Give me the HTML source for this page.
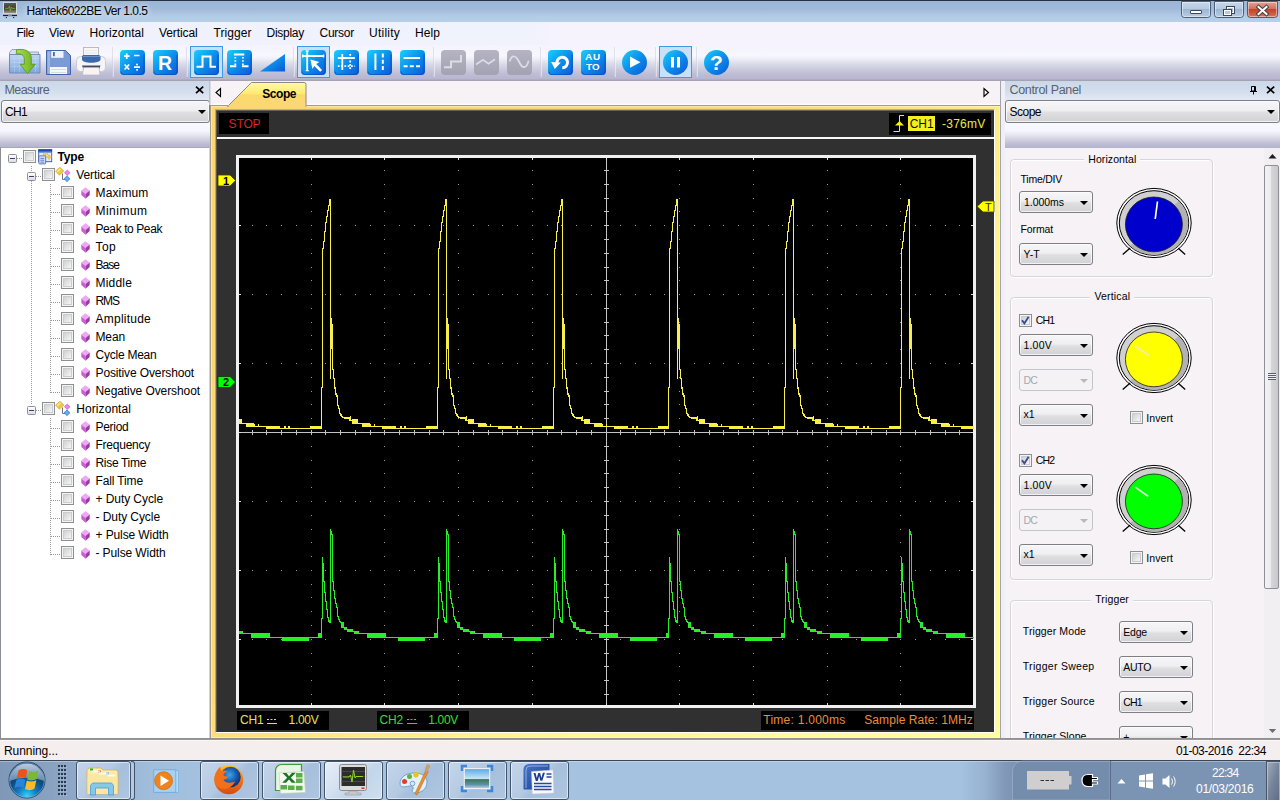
<!DOCTYPE html><html lang="en"><head><meta charset="utf-8"><title>Hantek6022BE</title><style>
html,body{margin:0;padding:0;background:#f6f2f6;overflow:hidden}
body{width:1280px;height:800px;position:relative;font-family:"Liberation Sans",sans-serif;font-size:12px}
.t{position:absolute;white-space:pre;line-height:1;}
.a{position:absolute}
.cb{position:absolute;border:1px solid #7e7e86;border-radius:3px;box-sizing:border-box;background:linear-gradient(#f6f5f7 0%,#efeef0 45%,#dfdee1 55%,#d2d1d5 100%);box-shadow:inset 0 0 0 1px rgba(255,255,255,.7)}
.cb.dis{border-color:#c4c4cc;background:#f4f2f5;box-shadow:none}
.arr{position:absolute;width:0;height:0;border-left:4px solid transparent;border-right:4px solid transparent;border-top:4px solid #000}
.arr.dis{border-top-color:#b8b8be}
.chk{position:absolute;width:13px;height:13px;box-sizing:border-box;border:1px solid #8e8f8f;background:#f4f4f4;box-shadow:inset 0 0 0 1px #f4f4f4, inset 0 0 0 2px #c9cdd0}
.chk i{position:absolute;left:2px;top:2px;width:7px;height:7px;background:linear-gradient(135deg,#cfd0d2,#f6f6f6)}
.grp{position:absolute;border:1px solid #d7d5dc;border-radius:4px;box-sizing:border-box;box-shadow:inset 1px 1px 0 #fff, 1px 1px 0 #fff}
</style></head><body>
<div class="a" style="left:0;top:0;width:1280px;height:22px;background:linear-gradient(#9cb6d5 0%,#9fb9d8 40%,#adc5e2 62%,#b3cde7 80%,#b6d0ea 100%)"></div>
<div class="a" style="left:0;top:0;width:1280px;height:1px;background:#27323f"></div>
<span class="t" style="left:26.50px;top:5.00px;font-size:12px;color:#000;letter-spacing:-0.504px;text-shadow:0 0 5px rgba(235,245,255,.9),0 0 9px rgba(225,238,252,.8),0 0 12px rgba(220,235,250,.6);">Hantek6022BE Ver 1.0.5</span>
<svg class="a" style="left:0;top:0" width="22" height="22" viewBox="0 0 22 22"><defs><linearGradient id="tis" x1="0" y1="0" x2="0" y2="1"><stop offset="0" stop-color="#5a5a58"/><stop offset=".55" stop-color="#3a3a30"/><stop offset="1" stop-color="#a09890"/></linearGradient></defs><rect x="3" y="2.200" width="14" height="12.200" fill="#e8eaf0" fill-opacity=".75"/><rect x="4" y="3" width="12" height="10.200" fill="url(#tis)"/><path d="M5.200 8.300h3.300l1-2.300l.9 5.200l1-4.200l.8 1.300h3" fill="none" stroke="#78a828" stroke-width="1"/><rect x="3" y="14.800" width="14" height="1.300" fill="#1a1c22"/><rect x="8" y="14.800" width="4" height="1.300" fill="#8a8a8a"/><rect x="5.800" y="17" width="1.200" height="1.100" fill="#2c3440"/><rect x="13" y="17" width="1.200" height="1.100" fill="#2c3440"/><rect x="7.500" y="17.200" width="5" height=".8" fill="#c8d0dc" fill-opacity=".7"/></svg>
<svg class="a" style="left:1178px;top:0" width="102" height="22" viewBox="1178 0 102 22"><defs><linearGradient id="cbg" x1="0" y1="0" x2="0" y2="1"><stop offset="0" stop-color="#c9d9eb"/><stop offset=".45" stop-color="#b5c9e0"/><stop offset=".5" stop-color="#9db6d3"/><stop offset="1" stop-color="#b8cee6"/></linearGradient><linearGradient id="cbr" x1="0" y1="0" x2="0" y2="1"><stop offset="0" stop-color="#e8a594"/><stop offset=".45" stop-color="#d4705a"/><stop offset=".5" stop-color="#c3432b"/><stop offset="1" stop-color="#d8745a"/></linearGradient></defs><path d="M1181.5 1.5h29v13a3 3 0 0 1 -3 3h-23a3 3 0 0 1 -3 -3z" fill="url(#cbg)" stroke="#4d5d75" stroke-width="1"/><path d="M1182.5 2.5h27v12a2 2 0 0 1 -2 2h-23a2 2 0 0 1 -2 -2z" fill="none" stroke="rgba(255,255,255,.45)" stroke-width="1"/><path d="M1214.5 1.5h29v13a3 3 0 0 1 -3 3h-23a3 3 0 0 1 -3 -3z" fill="url(#cbg)" stroke="#4d5d75" stroke-width="1"/><path d="M1215.5 2.5h27v12a2 2 0 0 1 -2 2h-23a2 2 0 0 1 -2 -2z" fill="none" stroke="rgba(255,255,255,.45)" stroke-width="1"/><path d="M1247.5 1.5h30v13a3 3 0 0 1 -3 3h-24a3 3 0 0 1 -3 -3z" fill="url(#cbr)" stroke="#4d5d75" stroke-width="1"/><path d="M1248.5 2.5h28v12a2 2 0 0 1 -2 2h-24a2 2 0 0 1 -2 -2z" fill="none" stroke="rgba(255,255,255,.45)" stroke-width="1"/><rect x="1190.5" y="10.5" width="11" height="3" rx=".5" fill="#fff" stroke="#445" stroke-width="1"/><rect x="1226.5" y="6.5" width="8" height="7" fill="none" stroke="#445" stroke-width="1"/><rect x="1227.5" y="7.5" width="6" height="5" fill="none" stroke="#fff" stroke-width="1"/><rect x="1223.5" y="9.5" width="8" height="6" fill="#b5c9e0" stroke="#445" stroke-width="1"/><rect x="1224.5" y="10.5" width="6" height="4" fill="none" stroke="#fff" stroke-width="1"/><path d="M1258.5 7l8 7M1266.5 7l-8 7" stroke="#3d3d45" stroke-width="3.8" stroke-linecap="square"/><path d="M1258.5 7l8 7M1266.5 7l-8 7" stroke="#fff" stroke-width="2" stroke-linecap="square"/></svg>
<div class="a" style="left:0;top:22px;width:1280px;height:23px;background:linear-gradient(90deg,#eff1fc 0,#f0f2fc 520px,#f6f3fd 560px,#f6f3fd 100%)"></div>
<span class="t" style="left:16.50px;top:27.00px;font-size:12px;color:#000;letter-spacing:-0.459px;">File</span>
<span class="t" style="left:49.00px;top:27.00px;font-size:12px;color:#000;letter-spacing:-0.198px;">View</span>
<span class="t" style="left:89.50px;top:27.00px;font-size:12px;color:#000;letter-spacing:0.048px;">Horizontal</span>
<span class="t" style="left:159.00px;top:27.00px;font-size:12px;color:#000;letter-spacing:-0.106px;">Vertical</span>
<span class="t" style="left:213.50px;top:27.00px;font-size:12px;color:#000;letter-spacing:0.062px;">Trigger</span>
<span class="t" style="left:266.50px;top:27.00px;font-size:12px;color:#000;letter-spacing:-0.264px;">Display</span>
<span class="t" style="left:319.50px;top:27.00px;font-size:12px;color:#000;letter-spacing:-0.251px;">Cursor</span>
<span class="t" style="left:369.00px;top:27.00px;font-size:12px;color:#000;letter-spacing:0.238px;">Utility</span>
<span class="t" style="left:415.00px;top:27.00px;font-size:12px;color:#000;letter-spacing:0.080px;">Help</span>
<div class="a" style="left:0;top:45px;width:1280px;height:35px;background:linear-gradient(#f5f3fe 0%,#f7f7ff 30%,#eeeef7 40%,#dedfea 51%,#cdcee0 66%,#bebdd5 83%,#b6b4cf 100%)"></div>
<div class="a" style="left:0;top:79px;width:1280px;height:2px;background:linear-gradient(#b4b2cc,#a09ea8)"></div>
<svg class="a" style="left:0;top:44px" width="760" height="36" viewBox="0 44 760 36"><defs><linearGradient id="bl" x1="0" y1="0" x2="1" y2="1"><stop offset="0" stop-color="#1ad0fc"/><stop offset=".5" stop-color="#0d8eec"/><stop offset="1" stop-color="#0b58d6"/></linearGradient><linearGradient id="gy" x1="0" y1="0" x2="0" y2="1"><stop offset="0" stop-color="#b4b4c2"/><stop offset="1" stop-color="#a2a2b2"/></linearGradient><linearGradient id="fo" x1="0" y1="0" x2="0" y2="1"><stop offset="0" stop-color="#c0d6f2"/><stop offset="1" stop-color="#7da7e0"/></linearGradient><linearGradient id="ga" x1="0" y1="0" x2="1" y2="0"><stop offset="0" stop-color="#a8dc50"/><stop offset="1" stop-color="#6cae24"/></linearGradient></defs><rect x="112" y="47" width="1" height="30" fill="#cfccdc" fill-opacity=".55"/><rect x="113" y="47" width="1" height="30" fill="#fbfaff" fill-opacity=".5"/><rect x="186" y="47" width="1" height="30" fill="#cfccdc" fill-opacity=".55"/><rect x="187" y="47" width="1" height="30" fill="#fbfaff" fill-opacity=".5"/><rect x="293" y="47" width="1" height="30" fill="#cfccdc" fill-opacity=".55"/><rect x="294" y="47" width="1" height="30" fill="#fbfaff" fill-opacity=".5"/><rect x="433" y="47" width="1" height="30" fill="#cfccdc" fill-opacity=".55"/><rect x="434" y="47" width="1" height="30" fill="#fbfaff" fill-opacity=".5"/><rect x="540" y="47" width="1" height="30" fill="#cfccdc" fill-opacity=".55"/><rect x="541" y="47" width="1" height="30" fill="#fbfaff" fill-opacity=".5"/><rect x="614" y="47" width="1" height="30" fill="#cfccdc" fill-opacity=".55"/><rect x="615" y="47" width="1" height="30" fill="#fbfaff" fill-opacity=".5"/><rect x="655" y="47" width="1" height="30" fill="#cfccdc" fill-opacity=".55"/><rect x="656" y="47" width="1" height="30" fill="#fbfaff" fill-opacity=".5"/><rect x="696" y="47" width="1" height="30" fill="#cfccdc" fill-opacity=".55"/><rect x="697" y="47" width="1" height="30" fill="#fbfaff" fill-opacity=".5"/><rect x="190.5" y="46.5" width="32" height="31" fill="#c9e0f7" stroke="#3c9be8"/><rect x="297.5" y="46.5" width="32" height="31" fill="#c9e0f7" stroke="#3c9be8"/><rect x="659.5" y="46.5" width="32" height="31" fill="#c9e0f7" stroke="#3c9be8"/><path d="M9.500 72.500v-20l2.500-3h10l2 2.500h14.500v20.500z" fill="#d6e2f4" stroke="#8c9cb8" stroke-width=".9"/><path d="M9.500 54.500h30.500v18.500h-30.500z" fill="url(#fo)" stroke="#6c86b4" stroke-width=".9"/><path d="M10.500 58.500h28.500M10.500 62.500h28.500M10.500 66.500h28.500M14.500 55.500v17M19.500 55.500v17M35.500 55.500v17" stroke="#d4e2f6" stroke-opacity=".5" stroke-width=".6"/><path d="M16.500 49.800c8-1.500 14.800 1.200 14.800 8.200v6.300h4l-7.800 9.400l-7.400-9.400h4.200v-5.500c0-3.500-3.500-5.500-8-5z" fill="url(#ga)" stroke="#5c9a1c" stroke-width=".9"/><g transform="translate(46,50)"><path d="M.5 .5h19l5 5v19h-24z" fill="#7b9bd6" stroke="#4262aa"/><path d="M1.500 1.500h2.500v22h-2.500z" fill="#9cb6e4"/><rect x="5.200" y="1" width="12.300" height="6.800" fill="#eef2fa"/><rect x="7" y="2" width="1.800" height="4.200" fill="#4a68a8"/><rect x="4" y="17" width="17" height="7" fill="#f6f7fa"/><path d="M5 19.500h15M5 22.500h15" stroke="#ccd4e4" stroke-width=".8"/></g><rect x="83.500" y="47.500" width="15" height="9" fill="#f7f7f9" stroke="#b0b4c2" stroke-width=".9"/><path d="M85 50.500h12M85 53h12" stroke="#e8e4e0" stroke-width=".8"/><rect x="76.500" y="56.500" width="29" height="15" rx="4" fill="#f5f5f8" stroke="#c4c6d2" stroke-width=".9"/><path d="M82 57c0-1.500 1-2 2.500-2h13.500c1.500 0 2.500 .500 2.500 2v2.500c0 2-4 3.200-9.300 3.200s-9.200-1.200-9.200-3.200z" fill="#3e68ac"/><path d="M83 56.500h17" stroke="#6c90cc" stroke-width="1"/><path d="M82 65.500h18.500l-1.500 4h-15.500z" fill="#3e4c66"/><path d="M83.500 67.500h15.500l1 7.500h-17.500z" fill="#faf3f1" stroke="#b4b4c0" stroke-width=".7"/><g transform="translate(120,50)"><rect x="0" y="0" width="25" height="25" rx="4" fill="url(#bl)"/><path d="M1 21.5v0a3 3 0 0 0 3 3h17a3 3 0 0 0 3-3v-17" fill="none" stroke="#0a46b4" stroke-opacity=".55" stroke-width="1.2"/><path d="M4 6.200h5.500M6.750 3.500v5.500M14 5.500h5.500M4.600 14.500l4.600 5M9.200 14.500l-4.600 5M14 17.200h6" stroke="#fff" stroke-width="1.700" fill="none"/><rect x="16.200" y="13.700" width="1.700" height="1.700" fill="#fff"/><rect x="16.200" y="19" width="1.700" height="1.700" fill="#fff"/></g><g transform="translate(153,50)"><rect x="0" y="0" width="25" height="25" rx="4" fill="url(#bl)"/><path d="M1 21.5v0a3 3 0 0 0 3 3h17a3 3 0 0 0 3-3v-17" fill="none" stroke="#0a46b4" stroke-opacity=".55" stroke-width="1.2"/></g><g transform="translate(194,50)"><rect x="0" y="0" width="25" height="25" rx="4" fill="url(#bl)"/><path d="M1 21.5v0a3 3 0 0 0 3 3h17a3 3 0 0 0 3-3v-17" fill="none" stroke="#0a46b4" stroke-opacity=".55" stroke-width="1.2"/><path d="M2.500 16.800h6v-10.400h8v10.400h5.500" stroke="#fff" stroke-width="2" fill="none"/></g><g transform="translate(227,50)"><rect x="0" y="0" width="25" height="25" rx="4" fill="url(#bl)"/><path d="M1 21.5v0a3 3 0 0 0 3 3h17a3 3 0 0 0 3-3v-17" fill="none" stroke="#0a46b4" stroke-opacity=".55" stroke-width="1.2"/><path d="M3 16.200h6.300M14.900 16.200h6.600M6.900 4.500h10.400" stroke="#fff" stroke-width="2"/><path d="M8.300 7v8M15.900 7v8" stroke="#fff" stroke-width="1.800" stroke-dasharray="1.600 1.600" fill="none"/></g><path d="M260 71.500h25v-17.500z" fill="url(#bl)"/><g transform="translate(301,50)"><rect x="0" y="0" width="25" height="25" rx="4" fill="url(#bl)"/><path d="M1 21.5v0a3 3 0 0 0 3 3h17a3 3 0 0 0 3-3v-17" fill="none" stroke="#0a46b4" stroke-opacity=".55" stroke-width="1.2"/><path d="M1.700 6h21M6.200 1v19.700" stroke="#fff" stroke-width="1.800"/><path d="M1.700 4.500v3M22.700 4.500v3M4.700 1h3M4.700 20.700h3" stroke="#fff" stroke-width="1.300"/><path d="M9.400 9.500l9 2.600l-3.200 1.900l5.900 5.900l-1.900 1.900l-5.900-5.900l-1.900 3.200z" fill="#fff"/></g><g transform="translate(334,50)"><rect x="0" y="0" width="25" height="25" rx="4" fill="url(#bl)"/><path d="M1 21.5v0a3 3 0 0 0 3 3h17a3 3 0 0 0 3-3v-17" fill="none" stroke="#0a46b4" stroke-opacity=".55" stroke-width="1.2"/><path d="M3.800 8h17M8.300 4v16" stroke="#fff" stroke-width="1.800"/><path d="M3.800 16.200h17M16.200 4v16" stroke="#fff" stroke-width="1.800" stroke-dasharray="1.800 1.500"/></g><g transform="translate(367,50)"><rect x="0" y="0" width="25" height="25" rx="4" fill="url(#bl)"/><path d="M1 21.5v0a3 3 0 0 0 3 3h17a3 3 0 0 0 3-3v-17" fill="none" stroke="#0a46b4" stroke-opacity=".55" stroke-width="1.2"/><path d="M8.400 3.500v16.500" stroke="#fff" stroke-width="2"/><path d="M15.800 3.500v16.500" stroke="#fff" stroke-width="2" stroke-dasharray="4 2.200"/></g><g transform="translate(400,50)"><rect x="0" y="0" width="25" height="25" rx="4" fill="url(#bl)"/><path d="M1 21.5v0a3 3 0 0 0 3 3h17a3 3 0 0 0 3-3v-17" fill="none" stroke="#0a46b4" stroke-opacity=".55" stroke-width="1.2"/><path d="M3.600 8h16.500" stroke="#fff" stroke-width="2"/><path d="M3.600 16.200h16.500" stroke="#fff" stroke-width="2" stroke-dasharray="4 2.200"/></g><g transform="translate(441,50)"><rect x="0" y="0" width="25" height="25" rx="4" fill="url(#gy)"/><path d="M3 17.200h7v-5.600h10v-6.600" stroke="#dcdce6" stroke-width="2" fill="none"/></g><g transform="translate(474,50)"><rect x="0" y="0" width="25" height="25" rx="4" fill="url(#gy)"/><path d="M2 14.400l7-4.600l5.500 3.900l6.500-4.500" stroke="#dcdce6" stroke-width="1.800" fill="none"/></g><g transform="translate(507,50)"><rect x="0" y="0" width="25" height="25" rx="4" fill="url(#gy)"/><path d="M2.600 11.600c2-7 6-7 9.600 0.400s7.400 6.500 9.400-1.400" stroke="#dcdce6" stroke-width="1.800" fill="none"/></g><g transform="translate(548,50)"><rect x="0" y="0" width="25" height="25" rx="4" fill="url(#bl)"/><path d="M1 21.5v0a3 3 0 0 0 3 3h17a3 3 0 0 0 3-3v-17" fill="none" stroke="#0a46b4" stroke-opacity=".55" stroke-width="1.2"/><path d="M9.300 14.500a5.300 5.300 0 1 1 5 3.300" stroke="#fff" stroke-width="3" fill="none"/><path d="M3.200 12l9.600 0.600l-6 6.400z" fill="#fff"/></g><g transform="translate(581,50)"><rect x="0" y="0" width="25" height="25" rx="4" fill="url(#bl)"/><path d="M1 21.5v0a3 3 0 0 0 3 3h17a3 3 0 0 0 3-3v-17" fill="none" stroke="#0a46b4" stroke-opacity=".55" stroke-width="1.2"/></g><circle cx="634.5" cy="62.5" r="12.5" fill="url(#bl)"/><circle cx="675.5" cy="62.5" r="12.5" fill="url(#bl)"/><circle cx="716.5" cy="62.5" r="12.5" fill="url(#bl)"/><path d="M630 56.500l10.500 5.700l-10.500 5.500z" fill="#fff"/><rect x="671" y="57" width="3" height="10.500" fill="#fff"/><rect x="677" y="57" width="3" height="10.500" fill="#fff"/></svg><span class="t" style="left:158.00px;top:54.00px;font-size:19.5px;color:#fff;font-weight:bold;">R</span><span class="t" style="left:585.30px;top:53.00px;font-size:9px;color:#fff;font-weight:bold;transform:scaleX(1.14);transform-origin:0 0;">A</span><span class="t" style="left:593.00px;top:53.00px;font-size:9px;color:#fff;font-weight:bold;transform:scaleX(1.1);transform-origin:0 0;">U</span><span class="t" style="left:586.00px;top:63.00px;font-size:9px;color:#fff;font-weight:bold;transform:scaleX(1.12);transform-origin:0 0;">T</span><span class="t" style="left:592.30px;top:63.00px;font-size:9px;color:#fff;font-weight:bold;transform:scaleX(1.08);transform-origin:0 0;">O</span><span class="t" style="left:710.00px;top:52.00px;font-size:21px;color:#fff;font-weight:bold;">?</span>
<div class="a" style="left:0;top:81px;width:210px;height:42px;background:linear-gradient(#cbd8e8 0px,#d3deec 10px,#e2e9f3 19px,#e6ecf8 42px)"></div><span class="t" style="left:4.50px;top:84.00px;font-size:12.5px;color:#56626f;letter-spacing:-0.590px;">Measure</span><svg class="a" style="left:195px;top:85px" width="10" height="10"><path d="M1 1.700l7.200 6.400M8.200 1.700l-7.200 6.400" stroke="#000" stroke-width="1.700"/></svg><div class="cb" style="left:1px;top:100px;width:208.5px;height:23px"></div><span class="t" style="left:5.00px;top:106.00px;font-size:12px;color:#000;letter-spacing:-0.669px;">CH1</span><div class="arr" style="left:198px;top:110px"></div><div class="a" style="left:0;top:123px;width:210px;height:25px;background:linear-gradient(#f9f8ff 0%,#f6f6fe 30%,#e6e6f0 48%,#d0d1e2 66%,#bebdd5 84%,#b4b2cc 100%)"></div><div class="a" style="left:0;top:147px;width:210px;height:591px;background:#fff;box-sizing:border-box;border:1px solid #8a8c96;border-top-color:#a9a7ba;border-bottom:none;border-right-color:#d4d2d8"></div><div class="a" style="left:17px;top:158px;height:1px;width:6px;background:repeating-linear-gradient(90deg,#9a9a9a 0 1px,transparent 1px 2px)"></div><div class="a" style="left:31px;top:166px;width:1px;height:6px;background:repeating-linear-gradient(#9a9a9a 0 1px,transparent 1px 2px)"></div><div class="a" style="left:31px;top:181px;width:1px;height:224px;background:repeating-linear-gradient(#9a9a9a 0 1px,transparent 1px 2px)"></div><div class="a" style="left:36px;top:176px;height:1px;width:6px;background:repeating-linear-gradient(90deg,#9a9a9a 0 1px,transparent 1px 2px)"></div><div class="a" style="left:36px;top:410px;height:1px;width:6px;background:repeating-linear-gradient(90deg,#9a9a9a 0 1px,transparent 1px 2px)"></div><div class="a" style="left:50px;top:184px;width:1px;height:209px;background:repeating-linear-gradient(#9a9a9a 0 1px,transparent 1px 2px)"></div><div class="a" style="left:50px;top:418px;width:1px;height:137px;background:repeating-linear-gradient(#9a9a9a 0 1px,transparent 1px 2px)"></div><div class="a" style="left:8px;top:154px;width:9px;height:9px;box-sizing:border-box;border:1px solid #8f8f96;border-radius:1.5px;background:linear-gradient(#fff,#dcdce6)"></div><div class="a" style="left:10px;top:158px;width:5px;height:1px;background:#3a3c78"></div><div class="chk" style="left:23px;top:150px"><i></i></div><svg class="a" style="left:36px;top:149px" width="17" height="16" viewBox="0 0 17 16"><rect x="2.700" y="0.700" width="13" height="12" fill="#e6ebf7" stroke="#3557a6" stroke-width=".9"/><rect x="2.300" y="0.300" width="13.800" height="2.500" fill="#2248b0"/><rect x="3" y="2.800" width="12.500" height="1" fill="#5c86dc"/><path d="M7 5.200h5M9.500 3.200v4M10.500 8h5M13 5.500v5" stroke="#e4b428" stroke-width="1.500"/><path d="M8 5.200h3M11.500 8h3" stroke="#fff2b0" stroke-width=".6"/><rect x="2.900" y="6.900" width="6.800" height="8" rx=".8" fill="#e4ecfb" stroke="#4c68a4" stroke-width=".9"/><path d="M4.300 9.300h4M4.300 11.200h4M4.300 13.100h4" stroke="#5474c8" stroke-width="1"/></svg><span class="t" style="left:57.50px;top:151.00px;font-size:12px;color:#000;font-weight:bold;letter-spacing:-0.154px;">Type</span><div class="a" style="left:27px;top:172px;width:9px;height:9px;box-sizing:border-box;border:1px solid #8f8f96;border-radius:1.5px;background:linear-gradient(#fff,#dcdce6)"></div><div class="a" style="left:29px;top:176px;width:5px;height:1px;background:#3a3c78"></div><div class="chk" style="left:42px;top:168px"><i></i></div><svg class="a" style="left:55px;top:167px" width="16" height="16" viewBox="0 0 16 16"><path d="M7.500 6.500v6h2.500" fill="none" stroke="#70747c" stroke-width="1"/><path d="M.600 4.200l4.200-3.900l4 3.600l-4.400 4.400z" fill="#f4c838" stroke="#c89c1c" stroke-width=".6"/><path d="M1.600 4.200l3.200-2.900l1.200 1.100l-3.300 3z" fill="#fbe48c"/><path d="M12.250 3l2.800 2.750l-2.800 2.750l-2.800-2.750z" fill="#ee82f0" stroke="#b450b8" stroke-width=".6"/><path d="M12 8.800l3 2.950l-3 2.950l-3-2.950z" fill="#62aaf4" stroke="#2c6ec4" stroke-width=".6"/></svg><span class="t" style="left:76.30px;top:169.00px;font-size:12px;color:#000;letter-spacing:-0.106px;">Vertical</span><div class="a" style="left:51px;top:194px;height:1px;width:10px;background:repeating-linear-gradient(90deg,#9a9a9a 0 1px,transparent 1px 2px)"></div><div class="chk" style="left:61px;top:186px"><i></i></div><svg class="a" style="left:80.5px;top:187px" width="9" height="12" viewBox="0 0 9 12"><path d="M4.5 0.3l4.2 3.2l-4.2 3.4l-4.2-3.4z" fill="#f0a8f4"/><path d="M.3 3.5l4.2 3.4v4.8l-4.2-3.6z" fill="#c860d0"/><path d="M8.7 3.5l-4.2 3.4v4.8l4.2-3.6z" fill="#9a3aa4"/></svg><span class="t" style="left:95.50px;top:187.00px;font-size:12px;color:#000;letter-spacing:0.143px;">Maximum</span><div class="a" style="left:51px;top:212px;height:1px;width:10px;background:repeating-linear-gradient(90deg,#9a9a9a 0 1px,transparent 1px 2px)"></div><div class="chk" style="left:61px;top:204px"><i></i></div><svg class="a" style="left:80.5px;top:205px" width="9" height="12" viewBox="0 0 9 12"><path d="M4.5 0.3l4.2 3.2l-4.2 3.4l-4.2-3.4z" fill="#f0a8f4"/><path d="M.3 3.5l4.2 3.4v4.8l-4.2-3.6z" fill="#c860d0"/><path d="M8.7 3.5l-4.2 3.4v4.8l4.2-3.6z" fill="#9a3aa4"/></svg><span class="t" style="left:95.50px;top:205.00px;font-size:12px;color:#000;letter-spacing:0.476px;">Minimum</span><div class="a" style="left:51px;top:230px;height:1px;width:10px;background:repeating-linear-gradient(90deg,#9a9a9a 0 1px,transparent 1px 2px)"></div><div class="chk" style="left:61px;top:222px"><i></i></div><svg class="a" style="left:80.5px;top:223px" width="9" height="12" viewBox="0 0 9 12"><path d="M4.5 0.3l4.2 3.2l-4.2 3.4l-4.2-3.4z" fill="#f0a8f4"/><path d="M.3 3.5l4.2 3.4v4.8l-4.2-3.6z" fill="#c860d0"/><path d="M8.7 3.5l-4.2 3.4v4.8l4.2-3.6z" fill="#9a3aa4"/></svg><span class="t" style="left:95.50px;top:223.00px;font-size:12px;color:#000;letter-spacing:-0.407px;">Peak to Peak</span><div class="a" style="left:51px;top:248px;height:1px;width:10px;background:repeating-linear-gradient(90deg,#9a9a9a 0 1px,transparent 1px 2px)"></div><div class="chk" style="left:61px;top:240px"><i></i></div><svg class="a" style="left:80.5px;top:241px" width="9" height="12" viewBox="0 0 9 12"><path d="M4.5 0.3l4.2 3.2l-4.2 3.4l-4.2-3.4z" fill="#f0a8f4"/><path d="M.3 3.5l4.2 3.4v4.8l-4.2-3.6z" fill="#c860d0"/><path d="M8.7 3.5l-4.2 3.4v4.8l4.2-3.6z" fill="#9a3aa4"/></svg><span class="t" style="left:95.50px;top:241.00px;font-size:12px;color:#000;letter-spacing:0.384px;">Top</span><div class="a" style="left:51px;top:266px;height:1px;width:10px;background:repeating-linear-gradient(90deg,#9a9a9a 0 1px,transparent 1px 2px)"></div><div class="chk" style="left:61px;top:258px"><i></i></div><svg class="a" style="left:80.5px;top:259px" width="9" height="12" viewBox="0 0 9 12"><path d="M4.5 0.3l4.2 3.2l-4.2 3.4l-4.2-3.4z" fill="#f0a8f4"/><path d="M.3 3.5l4.2 3.4v4.8l-4.2-3.6z" fill="#c860d0"/><path d="M8.7 3.5l-4.2 3.4v4.8l4.2-3.6z" fill="#9a3aa4"/></svg><span class="t" style="left:95.50px;top:259.00px;font-size:12px;color:#000;letter-spacing:-0.963px;">Base</span><div class="a" style="left:51px;top:284px;height:1px;width:10px;background:repeating-linear-gradient(90deg,#9a9a9a 0 1px,transparent 1px 2px)"></div><div class="chk" style="left:61px;top:276px"><i></i></div><svg class="a" style="left:80.5px;top:277px" width="9" height="12" viewBox="0 0 9 12"><path d="M4.5 0.3l4.2 3.2l-4.2 3.4l-4.2-3.4z" fill="#f0a8f4"/><path d="M.3 3.5l4.2 3.4v4.8l-4.2-3.6z" fill="#c860d0"/><path d="M8.7 3.5l-4.2 3.4v4.8l4.2-3.6z" fill="#9a3aa4"/></svg><span class="t" style="left:95.50px;top:277.00px;font-size:12px;color:#000;letter-spacing:0.192px;">Middle</span><div class="a" style="left:51px;top:302px;height:1px;width:10px;background:repeating-linear-gradient(90deg,#9a9a9a 0 1px,transparent 1px 2px)"></div><div class="chk" style="left:61px;top:294px"><i></i></div><svg class="a" style="left:80.5px;top:295px" width="9" height="12" viewBox="0 0 9 12"><path d="M4.5 0.3l4.2 3.2l-4.2 3.4l-4.2-3.4z" fill="#f0a8f4"/><path d="M.3 3.5l4.2 3.4v4.8l-4.2-3.6z" fill="#c860d0"/><path d="M8.7 3.5l-4.2 3.4v4.8l4.2-3.6z" fill="#9a3aa4"/></svg><span class="t" style="left:95.50px;top:295.00px;font-size:12px;color:#000;letter-spacing:-1.055px;">RMS</span><div class="a" style="left:51px;top:320px;height:1px;width:10px;background:repeating-linear-gradient(90deg,#9a9a9a 0 1px,transparent 1px 2px)"></div><div class="chk" style="left:61px;top:312px"><i></i></div><svg class="a" style="left:80.5px;top:313px" width="9" height="12" viewBox="0 0 9 12"><path d="M4.5 0.3l4.2 3.2l-4.2 3.4l-4.2-3.4z" fill="#f0a8f4"/><path d="M.3 3.5l4.2 3.4v4.8l-4.2-3.6z" fill="#c860d0"/><path d="M8.7 3.5l-4.2 3.4v4.8l4.2-3.6z" fill="#9a3aa4"/></svg><span class="t" style="left:95.50px;top:313.00px;font-size:12px;color:#000;letter-spacing:0.238px;">Amplitude</span><div class="a" style="left:51px;top:338px;height:1px;width:10px;background:repeating-linear-gradient(90deg,#9a9a9a 0 1px,transparent 1px 2px)"></div><div class="chk" style="left:61px;top:330px"><i></i></div><svg class="a" style="left:80.5px;top:331px" width="9" height="12" viewBox="0 0 9 12"><path d="M4.5 0.3l4.2 3.2l-4.2 3.4l-4.2-3.4z" fill="#f0a8f4"/><path d="M.3 3.5l4.2 3.4v4.8l-4.2-3.6z" fill="#c860d0"/><path d="M8.7 3.5l-4.2 3.4v4.8l4.2-3.6z" fill="#9a3aa4"/></svg><span class="t" style="left:95.50px;top:331.00px;font-size:12px;color:#000;letter-spacing:-0.129px;">Mean</span><div class="a" style="left:51px;top:356px;height:1px;width:10px;background:repeating-linear-gradient(90deg,#9a9a9a 0 1px,transparent 1px 2px)"></div><div class="chk" style="left:61px;top:348px"><i></i></div><svg class="a" style="left:80.5px;top:349px" width="9" height="12" viewBox="0 0 9 12"><path d="M4.5 0.3l4.2 3.2l-4.2 3.4l-4.2-3.4z" fill="#f0a8f4"/><path d="M.3 3.5l4.2 3.4v4.8l-4.2-3.6z" fill="#c860d0"/><path d="M8.7 3.5l-4.2 3.4v4.8l4.2-3.6z" fill="#9a3aa4"/></svg><span class="t" style="left:95.50px;top:349.00px;font-size:12px;color:#000;letter-spacing:-0.236px;">Cycle Mean</span><div class="a" style="left:51px;top:374px;height:1px;width:10px;background:repeating-linear-gradient(90deg,#9a9a9a 0 1px,transparent 1px 2px)"></div><div class="chk" style="left:61px;top:366px"><i></i></div><svg class="a" style="left:80.5px;top:367px" width="9" height="12" viewBox="0 0 9 12"><path d="M4.5 0.3l4.2 3.2l-4.2 3.4l-4.2-3.4z" fill="#f0a8f4"/><path d="M.3 3.5l4.2 3.4v4.8l-4.2-3.6z" fill="#c860d0"/><path d="M8.7 3.5l-4.2 3.4v4.8l4.2-3.6z" fill="#9a3aa4"/></svg><span class="t" style="left:95.50px;top:367.00px;font-size:12px;color:#000;letter-spacing:-0.123px;">Positive Overshoot</span><div class="a" style="left:51px;top:392px;height:1px;width:10px;background:repeating-linear-gradient(90deg,#9a9a9a 0 1px,transparent 1px 2px)"></div><div class="chk" style="left:61px;top:384px"><i></i></div><svg class="a" style="left:80.5px;top:385px" width="9" height="12" viewBox="0 0 9 12"><path d="M4.5 0.3l4.2 3.2l-4.2 3.4l-4.2-3.4z" fill="#f0a8f4"/><path d="M.3 3.5l4.2 3.4v4.8l-4.2-3.6z" fill="#c860d0"/><path d="M8.7 3.5l-4.2 3.4v4.8l4.2-3.6z" fill="#9a3aa4"/></svg><span class="t" style="left:95.50px;top:385.00px;font-size:12px;color:#000;letter-spacing:-0.086px;">Negative Overshoot</span><div class="a" style="left:27px;top:406px;width:9px;height:9px;box-sizing:border-box;border:1px solid #8f8f96;border-radius:1.5px;background:linear-gradient(#fff,#dcdce6)"></div><div class="a" style="left:29px;top:410px;width:5px;height:1px;background:#3a3c78"></div><div class="chk" style="left:42px;top:402px"><i></i></div><svg class="a" style="left:55px;top:401px" width="16" height="16" viewBox="0 0 16 16"><path d="M7.500 6.500v6h2.500" fill="none" stroke="#70747c" stroke-width="1"/><path d="M.600 4.200l4.200-3.900l4 3.600l-4.400 4.400z" fill="#f4c838" stroke="#c89c1c" stroke-width=".6"/><path d="M1.600 4.200l3.200-2.900l1.200 1.100l-3.300 3z" fill="#fbe48c"/><path d="M12.250 3l2.800 2.750l-2.800 2.750l-2.800-2.750z" fill="#ee82f0" stroke="#b450b8" stroke-width=".6"/><path d="M12 8.800l3 2.950l-3 2.950l-3-2.950z" fill="#62aaf4" stroke="#2c6ec4" stroke-width=".6"/></svg><span class="t" style="left:76.30px;top:403.00px;font-size:12px;color:#000;letter-spacing:0.068px;">Horizontal</span><div class="a" style="left:51px;top:428px;height:1px;width:10px;background:repeating-linear-gradient(90deg,#9a9a9a 0 1px,transparent 1px 2px)"></div><div class="chk" style="left:61px;top:420px"><i></i></div><svg class="a" style="left:80.5px;top:421px" width="9" height="12" viewBox="0 0 9 12"><path d="M4.5 0.3l4.2 3.2l-4.2 3.4l-4.2-3.4z" fill="#f0a8f4"/><path d="M.3 3.5l4.2 3.4v4.8l-4.2-3.6z" fill="#c860d0"/><path d="M8.7 3.5l-4.2 3.4v4.8l4.2-3.6z" fill="#9a3aa4"/></svg><span class="t" style="left:95.50px;top:421.00px;font-size:12px;color:#000;letter-spacing:-0.281px;">Period</span><div class="a" style="left:51px;top:446px;height:1px;width:10px;background:repeating-linear-gradient(90deg,#9a9a9a 0 1px,transparent 1px 2px)"></div><div class="chk" style="left:61px;top:438px"><i></i></div><svg class="a" style="left:80.5px;top:439px" width="9" height="12" viewBox="0 0 9 12"><path d="M4.5 0.3l4.2 3.2l-4.2 3.4l-4.2-3.4z" fill="#f0a8f4"/><path d="M.3 3.5l4.2 3.4v4.8l-4.2-3.6z" fill="#c860d0"/><path d="M8.7 3.5l-4.2 3.4v4.8l4.2-3.6z" fill="#9a3aa4"/></svg><span class="t" style="left:95.50px;top:439.00px;font-size:12px;color:#000;letter-spacing:-0.244px;">Frequency</span><div class="a" style="left:51px;top:464px;height:1px;width:10px;background:repeating-linear-gradient(90deg,#9a9a9a 0 1px,transparent 1px 2px)"></div><div class="chk" style="left:61px;top:456px"><i></i></div><svg class="a" style="left:80.5px;top:457px" width="9" height="12" viewBox="0 0 9 12"><path d="M4.5 0.3l4.2 3.2l-4.2 3.4l-4.2-3.4z" fill="#f0a8f4"/><path d="M.3 3.5l4.2 3.4v4.8l-4.2-3.6z" fill="#c860d0"/><path d="M8.7 3.5l-4.2 3.4v4.8l4.2-3.6z" fill="#9a3aa4"/></svg><span class="t" style="left:95.50px;top:457.00px;font-size:12px;color:#000;letter-spacing:-0.316px;">Rise Time</span><div class="a" style="left:51px;top:482px;height:1px;width:10px;background:repeating-linear-gradient(90deg,#9a9a9a 0 1px,transparent 1px 2px)"></div><div class="chk" style="left:61px;top:474px"><i></i></div><svg class="a" style="left:80.5px;top:475px" width="9" height="12" viewBox="0 0 9 12"><path d="M4.5 0.3l4.2 3.2l-4.2 3.4l-4.2-3.4z" fill="#f0a8f4"/><path d="M.3 3.5l4.2 3.4v4.8l-4.2-3.6z" fill="#c860d0"/><path d="M8.7 3.5l-4.2 3.4v4.8l4.2-3.6z" fill="#9a3aa4"/></svg><span class="t" style="left:95.50px;top:475.00px;font-size:12px;color:#000;letter-spacing:-0.130px;">Fall Time</span><div class="a" style="left:51px;top:500px;height:1px;width:10px;background:repeating-linear-gradient(90deg,#9a9a9a 0 1px,transparent 1px 2px)"></div><div class="chk" style="left:61px;top:492px"><i></i></div><svg class="a" style="left:80.5px;top:493px" width="9" height="12" viewBox="0 0 9 12"><path d="M4.5 0.3l4.2 3.2l-4.2 3.4l-4.2-3.4z" fill="#f0a8f4"/><path d="M.3 3.5l4.2 3.4v4.8l-4.2-3.6z" fill="#c860d0"/><path d="M8.7 3.5l-4.2 3.4v4.8l4.2-3.6z" fill="#9a3aa4"/></svg><span class="t" style="left:95.50px;top:493.00px;font-size:12px;color:#000;letter-spacing:-0.071px;">+ Duty Cycle</span><div class="a" style="left:51px;top:518px;height:1px;width:10px;background:repeating-linear-gradient(90deg,#9a9a9a 0 1px,transparent 1px 2px)"></div><div class="chk" style="left:61px;top:510px"><i></i></div><svg class="a" style="left:80.5px;top:511px" width="9" height="12" viewBox="0 0 9 12"><path d="M4.5 0.3l4.2 3.2l-4.2 3.4l-4.2-3.4z" fill="#f0a8f4"/><path d="M.3 3.5l4.2 3.4v4.8l-4.2-3.6z" fill="#c860d0"/><path d="M8.7 3.5l-4.2 3.4v4.8l4.2-3.6z" fill="#9a3aa4"/></svg><span class="t" style="left:95.50px;top:511.00px;font-size:12px;color:#000;letter-spacing:-0.070px;">- Duty Cycle</span><div class="a" style="left:51px;top:536px;height:1px;width:10px;background:repeating-linear-gradient(90deg,#9a9a9a 0 1px,transparent 1px 2px)"></div><div class="chk" style="left:61px;top:528px"><i></i></div><svg class="a" style="left:80.5px;top:529px" width="9" height="12" viewBox="0 0 9 12"><path d="M4.5 0.3l4.2 3.2l-4.2 3.4l-4.2-3.4z" fill="#f0a8f4"/><path d="M.3 3.5l4.2 3.4v4.8l-4.2-3.6z" fill="#c860d0"/><path d="M8.7 3.5l-4.2 3.4v4.8l4.2-3.6z" fill="#9a3aa4"/></svg><span class="t" style="left:95.50px;top:529.00px;font-size:12px;color:#000;letter-spacing:-0.105px;">+ Pulse Width</span><div class="a" style="left:51px;top:554px;height:1px;width:10px;background:repeating-linear-gradient(90deg,#9a9a9a 0 1px,transparent 1px 2px)"></div><div class="chk" style="left:61px;top:546px"><i></i></div><svg class="a" style="left:80.5px;top:547px" width="9" height="12" viewBox="0 0 9 12"><path d="M4.5 0.3l4.2 3.2l-4.2 3.4l-4.2-3.4z" fill="#f0a8f4"/><path d="M.3 3.5l4.2 3.4v4.8l-4.2-3.6z" fill="#c860d0"/><path d="M8.7 3.5l-4.2 3.4v4.8l4.2-3.6z" fill="#9a3aa4"/></svg><span class="t" style="left:95.50px;top:547.00px;font-size:12px;color:#000;letter-spacing:-0.104px;">- Pulse Width</span>
<div style="position:absolute;left:210px;top:105px;width:791px;height:634px;background:#a39c8a"></div>
<div style="position:absolute;left:211px;top:106px;width:789px;height:632px;background:linear-gradient(135deg,#fbd671 0%,#fbd975 40%,#fdeb85 55%,#fff694 70%,#fffc9e 100%)"></div>
<div style="position:absolute;left:211px;top:106px;width:789px;height:632px;box-sizing:border-box;border:1px solid rgba(255,250,225,.45)"></div>
<div style="position:absolute;left:215px;top:109px;width:780px;height:624px;box-sizing:border-box;border:1px solid;border-color:#c0b080 #fffef4 #fffef4 #b4a47a;background:#303030"></div>
<div style="position:absolute;left:216px;top:110px;width:778px;height:622px;box-sizing:border-box;border:1px solid;border-color:#686256 transparent transparent #5c564a;border-right:none;border-bottom:none;background:#303030"></div>
<div style="position:absolute;left:219px;top:113px;width:50px;height:21px;background:#000"></div>
<span class="t" style="left:228.50px;top:118.00px;font-size:12px;color:#d82424;letter-spacing:-0.114px;">STOP</span>
<div style="position:absolute;left:889px;top:113px;width:102px;height:22px;background:#000"></div>
<div style="position:absolute;left:908px;top:116px;width:27px;height:15px;background:#f4f020"></div>
<span class="t" style="left:909.80px;top:118.00px;font-size:12px;color:#101000;letter-spacing:-0.102px;">CH1</span>
<span class="t" style="left:942.00px;top:118.00px;font-size:12px;color:#e8e850;letter-spacing:0.247px;">-376mV</span>
<div style="position:absolute;left:217px;top:137px;width:777px;height:2px;background:#f8f8f8"></div>
<div style="position:absolute;left:236px;top:155px;width:740px;height:553px;background:#f0f0f0"></div>
<div style="position:absolute;left:239px;top:158px;width:734px;height:547px;background:#000"></div>
<div style="position:absolute;left:237px;top:711px;width:92px;height:19px;background:#000"></div>
<div style="position:absolute;left:377px;top:711px;width:92px;height:19px;background:#000"></div>
<div style="position:absolute;left:761px;top:711px;width:213px;height:19px;background:#000"></div>
<span class="t" style="left:240.00px;top:714.00px;font-size:12px;color:#e4e448;letter-spacing:-0.169px;">CH1</span>
<span class="t" style="left:288.50px;top:714.00px;font-size:12px;color:#e4e448;letter-spacing:-0.272px;">1.00V</span>
<span class="t" style="left:379.50px;top:714.00px;font-size:12px;color:#30e030;letter-spacing:-0.169px;">CH2</span>
<span class="t" style="left:428.20px;top:714.00px;font-size:12px;color:#30e030;letter-spacing:-0.312px;">1.00V</span>
<span class="t" style="left:763.30px;top:714.00px;font-size:12px;color:#f08c30;letter-spacing:0.253px;">Time: 1.000ms</span>
<span class="t" style="left:864.30px;top:714.00px;font-size:12px;color:#f08c30;letter-spacing:0.066px;">Sample Rate: 1MHz</span>
<svg style="position:absolute;left:0;top:0" width="1280" height="800" shape-rendering="crispEdges"><path d="M252 225h1v1h-1zM252 294h1v1h-1zM252 363h1v1h-1zM252 501h1v1h-1zM252 570h1v1h-1zM252 639h1v1h-1zM266 225h1v1h-1zM266 294h1v1h-1zM266 363h1v1h-1zM266 501h1v1h-1zM266 570h1v1h-1zM266 639h1v1h-1zM281 225h1v1h-1zM281 294h1v1h-1zM281 363h1v1h-1zM281 501h1v1h-1zM281 570h1v1h-1zM281 639h1v1h-1zM296 225h1v1h-1zM296 294h1v1h-1zM296 363h1v1h-1zM296 501h1v1h-1zM296 570h1v1h-1zM296 639h1v1h-1zM311 170h1v1h-1zM311 184h1v1h-1zM311 198h1v1h-1zM311 211h1v1h-1zM311 225h1v1h-1zM311 239h1v1h-1zM311 253h1v1h-1zM311 267h1v1h-1zM311 280h1v1h-1zM311 294h1v1h-1zM311 308h1v1h-1zM311 322h1v1h-1zM311 335h1v1h-1zM311 349h1v1h-1zM311 363h1v1h-1zM311 377h1v1h-1zM311 391h1v1h-1zM311 404h1v1h-1zM311 418h1v1h-1zM311 432h1v1h-1zM311 446h1v1h-1zM311 460h1v1h-1zM311 473h1v1h-1zM311 487h1v1h-1zM311 501h1v1h-1zM311 515h1v1h-1zM311 529h1v1h-1zM311 542h1v1h-1zM311 556h1v1h-1zM311 570h1v1h-1zM311 584h1v1h-1zM311 597h1v1h-1zM311 611h1v1h-1zM311 625h1v1h-1zM311 639h1v1h-1zM311 653h1v1h-1zM311 666h1v1h-1zM311 680h1v1h-1zM311 694h1v1h-1zM325 225h1v1h-1zM325 294h1v1h-1zM325 363h1v1h-1zM325 501h1v1h-1zM325 570h1v1h-1zM325 639h1v1h-1zM340 225h1v1h-1zM340 294h1v1h-1zM340 363h1v1h-1zM340 501h1v1h-1zM340 570h1v1h-1zM340 639h1v1h-1zM355 225h1v1h-1zM355 294h1v1h-1zM355 363h1v1h-1zM355 501h1v1h-1zM355 570h1v1h-1zM355 639h1v1h-1zM370 225h1v1h-1zM370 294h1v1h-1zM370 363h1v1h-1zM370 501h1v1h-1zM370 570h1v1h-1zM370 639h1v1h-1zM384 170h1v1h-1zM384 184h1v1h-1zM384 198h1v1h-1zM384 211h1v1h-1zM384 225h1v1h-1zM384 239h1v1h-1zM384 253h1v1h-1zM384 267h1v1h-1zM384 280h1v1h-1zM384 294h1v1h-1zM384 308h1v1h-1zM384 322h1v1h-1zM384 335h1v1h-1zM384 349h1v1h-1zM384 363h1v1h-1zM384 377h1v1h-1zM384 391h1v1h-1zM384 404h1v1h-1zM384 418h1v1h-1zM384 432h1v1h-1zM384 446h1v1h-1zM384 460h1v1h-1zM384 473h1v1h-1zM384 487h1v1h-1zM384 501h1v1h-1zM384 515h1v1h-1zM384 529h1v1h-1zM384 542h1v1h-1zM384 556h1v1h-1zM384 570h1v1h-1zM384 584h1v1h-1zM384 597h1v1h-1zM384 611h1v1h-1zM384 625h1v1h-1zM384 639h1v1h-1zM384 653h1v1h-1zM384 666h1v1h-1zM384 680h1v1h-1zM384 694h1v1h-1zM399 225h1v1h-1zM399 294h1v1h-1zM399 363h1v1h-1zM399 501h1v1h-1zM399 570h1v1h-1zM399 639h1v1h-1zM414 225h1v1h-1zM414 294h1v1h-1zM414 363h1v1h-1zM414 501h1v1h-1zM414 570h1v1h-1zM414 639h1v1h-1zM429 225h1v1h-1zM429 294h1v1h-1zM429 363h1v1h-1zM429 501h1v1h-1zM429 570h1v1h-1zM429 639h1v1h-1zM443 225h1v1h-1zM443 294h1v1h-1zM443 363h1v1h-1zM443 501h1v1h-1zM443 570h1v1h-1zM443 639h1v1h-1zM458 170h1v1h-1zM458 184h1v1h-1zM458 198h1v1h-1zM458 211h1v1h-1zM458 225h1v1h-1zM458 239h1v1h-1zM458 253h1v1h-1zM458 267h1v1h-1zM458 280h1v1h-1zM458 294h1v1h-1zM458 308h1v1h-1zM458 322h1v1h-1zM458 335h1v1h-1zM458 349h1v1h-1zM458 363h1v1h-1zM458 377h1v1h-1zM458 391h1v1h-1zM458 404h1v1h-1zM458 418h1v1h-1zM458 432h1v1h-1zM458 446h1v1h-1zM458 460h1v1h-1zM458 473h1v1h-1zM458 487h1v1h-1zM458 501h1v1h-1zM458 515h1v1h-1zM458 529h1v1h-1zM458 542h1v1h-1zM458 556h1v1h-1zM458 570h1v1h-1zM458 584h1v1h-1zM458 597h1v1h-1zM458 611h1v1h-1zM458 625h1v1h-1zM458 639h1v1h-1zM458 653h1v1h-1zM458 666h1v1h-1zM458 680h1v1h-1zM458 694h1v1h-1zM473 225h1v1h-1zM473 294h1v1h-1zM473 363h1v1h-1zM473 501h1v1h-1zM473 570h1v1h-1zM473 639h1v1h-1zM488 225h1v1h-1zM488 294h1v1h-1zM488 363h1v1h-1zM488 501h1v1h-1zM488 570h1v1h-1zM488 639h1v1h-1zM502 225h1v1h-1zM502 294h1v1h-1zM502 363h1v1h-1zM502 501h1v1h-1zM502 570h1v1h-1zM502 639h1v1h-1zM517 225h1v1h-1zM517 294h1v1h-1zM517 363h1v1h-1zM517 501h1v1h-1zM517 570h1v1h-1zM517 639h1v1h-1zM532 170h1v1h-1zM532 184h1v1h-1zM532 198h1v1h-1zM532 211h1v1h-1zM532 225h1v1h-1zM532 239h1v1h-1zM532 253h1v1h-1zM532 267h1v1h-1zM532 280h1v1h-1zM532 294h1v1h-1zM532 308h1v1h-1zM532 322h1v1h-1zM532 335h1v1h-1zM532 349h1v1h-1zM532 363h1v1h-1zM532 377h1v1h-1zM532 391h1v1h-1zM532 404h1v1h-1zM532 418h1v1h-1zM532 432h1v1h-1zM532 446h1v1h-1zM532 460h1v1h-1zM532 473h1v1h-1zM532 487h1v1h-1zM532 501h1v1h-1zM532 515h1v1h-1zM532 529h1v1h-1zM532 542h1v1h-1zM532 556h1v1h-1zM532 570h1v1h-1zM532 584h1v1h-1zM532 597h1v1h-1zM532 611h1v1h-1zM532 625h1v1h-1zM532 639h1v1h-1zM532 653h1v1h-1zM532 666h1v1h-1zM532 680h1v1h-1zM532 694h1v1h-1zM547 225h1v1h-1zM547 294h1v1h-1zM547 363h1v1h-1zM547 501h1v1h-1zM547 570h1v1h-1zM547 639h1v1h-1zM561 225h1v1h-1zM561 294h1v1h-1zM561 363h1v1h-1zM561 501h1v1h-1zM561 570h1v1h-1zM561 639h1v1h-1zM576 225h1v1h-1zM576 294h1v1h-1zM576 363h1v1h-1zM576 501h1v1h-1zM576 570h1v1h-1zM576 639h1v1h-1zM591 225h1v1h-1zM591 294h1v1h-1zM591 363h1v1h-1zM591 501h1v1h-1zM591 570h1v1h-1zM591 639h1v1h-1zM606 225h1v1h-1zM606 294h1v1h-1zM606 363h1v1h-1zM606 501h1v1h-1zM606 570h1v1h-1zM606 639h1v1h-1zM620 225h1v1h-1zM620 294h1v1h-1zM620 363h1v1h-1zM620 501h1v1h-1zM620 570h1v1h-1zM620 639h1v1h-1zM635 225h1v1h-1zM635 294h1v1h-1zM635 363h1v1h-1zM635 501h1v1h-1zM635 570h1v1h-1zM635 639h1v1h-1zM650 225h1v1h-1zM650 294h1v1h-1zM650 363h1v1h-1zM650 501h1v1h-1zM650 570h1v1h-1zM650 639h1v1h-1zM664 225h1v1h-1zM664 294h1v1h-1zM664 363h1v1h-1zM664 501h1v1h-1zM664 570h1v1h-1zM664 639h1v1h-1zM679 170h1v1h-1zM679 184h1v1h-1zM679 198h1v1h-1zM679 211h1v1h-1zM679 225h1v1h-1zM679 239h1v1h-1zM679 253h1v1h-1zM679 267h1v1h-1zM679 280h1v1h-1zM679 294h1v1h-1zM679 308h1v1h-1zM679 322h1v1h-1zM679 335h1v1h-1zM679 349h1v1h-1zM679 363h1v1h-1zM679 377h1v1h-1zM679 391h1v1h-1zM679 404h1v1h-1zM679 418h1v1h-1zM679 432h1v1h-1zM679 446h1v1h-1zM679 460h1v1h-1zM679 473h1v1h-1zM679 487h1v1h-1zM679 501h1v1h-1zM679 515h1v1h-1zM679 529h1v1h-1zM679 542h1v1h-1zM679 556h1v1h-1zM679 570h1v1h-1zM679 584h1v1h-1zM679 597h1v1h-1zM679 611h1v1h-1zM679 625h1v1h-1zM679 639h1v1h-1zM679 653h1v1h-1zM679 666h1v1h-1zM679 680h1v1h-1zM679 694h1v1h-1zM694 225h1v1h-1zM694 294h1v1h-1zM694 363h1v1h-1zM694 501h1v1h-1zM694 570h1v1h-1zM694 639h1v1h-1zM709 225h1v1h-1zM709 294h1v1h-1zM709 363h1v1h-1zM709 501h1v1h-1zM709 570h1v1h-1zM709 639h1v1h-1zM723 225h1v1h-1zM723 294h1v1h-1zM723 363h1v1h-1zM723 501h1v1h-1zM723 570h1v1h-1zM723 639h1v1h-1zM738 225h1v1h-1zM738 294h1v1h-1zM738 363h1v1h-1zM738 501h1v1h-1zM738 570h1v1h-1zM738 639h1v1h-1zM753 170h1v1h-1zM753 184h1v1h-1zM753 198h1v1h-1zM753 211h1v1h-1zM753 225h1v1h-1zM753 239h1v1h-1zM753 253h1v1h-1zM753 267h1v1h-1zM753 280h1v1h-1zM753 294h1v1h-1zM753 308h1v1h-1zM753 322h1v1h-1zM753 335h1v1h-1zM753 349h1v1h-1zM753 363h1v1h-1zM753 377h1v1h-1zM753 391h1v1h-1zM753 404h1v1h-1zM753 418h1v1h-1zM753 432h1v1h-1zM753 446h1v1h-1zM753 460h1v1h-1zM753 473h1v1h-1zM753 487h1v1h-1zM753 501h1v1h-1zM753 515h1v1h-1zM753 529h1v1h-1zM753 542h1v1h-1zM753 556h1v1h-1zM753 570h1v1h-1zM753 584h1v1h-1zM753 597h1v1h-1zM753 611h1v1h-1zM753 625h1v1h-1zM753 639h1v1h-1zM753 653h1v1h-1zM753 666h1v1h-1zM753 680h1v1h-1zM753 694h1v1h-1zM768 225h1v1h-1zM768 294h1v1h-1zM768 363h1v1h-1zM768 501h1v1h-1zM768 570h1v1h-1zM768 639h1v1h-1zM782 225h1v1h-1zM782 294h1v1h-1zM782 363h1v1h-1zM782 501h1v1h-1zM782 570h1v1h-1zM782 639h1v1h-1zM797 225h1v1h-1zM797 294h1v1h-1zM797 363h1v1h-1zM797 501h1v1h-1zM797 570h1v1h-1zM797 639h1v1h-1zM812 225h1v1h-1zM812 294h1v1h-1zM812 363h1v1h-1zM812 501h1v1h-1zM812 570h1v1h-1zM812 639h1v1h-1zM827 170h1v1h-1zM827 184h1v1h-1zM827 198h1v1h-1zM827 211h1v1h-1zM827 225h1v1h-1zM827 239h1v1h-1zM827 253h1v1h-1zM827 267h1v1h-1zM827 280h1v1h-1zM827 294h1v1h-1zM827 308h1v1h-1zM827 322h1v1h-1zM827 335h1v1h-1zM827 349h1v1h-1zM827 363h1v1h-1zM827 377h1v1h-1zM827 391h1v1h-1zM827 404h1v1h-1zM827 418h1v1h-1zM827 432h1v1h-1zM827 446h1v1h-1zM827 460h1v1h-1zM827 473h1v1h-1zM827 487h1v1h-1zM827 501h1v1h-1zM827 515h1v1h-1zM827 529h1v1h-1zM827 542h1v1h-1zM827 556h1v1h-1zM827 570h1v1h-1zM827 584h1v1h-1zM827 597h1v1h-1zM827 611h1v1h-1zM827 625h1v1h-1zM827 639h1v1h-1zM827 653h1v1h-1zM827 666h1v1h-1zM827 680h1v1h-1zM827 694h1v1h-1zM841 225h1v1h-1zM841 294h1v1h-1zM841 363h1v1h-1zM841 501h1v1h-1zM841 570h1v1h-1zM841 639h1v1h-1zM856 225h1v1h-1zM856 294h1v1h-1zM856 363h1v1h-1zM856 501h1v1h-1zM856 570h1v1h-1zM856 639h1v1h-1zM871 225h1v1h-1zM871 294h1v1h-1zM871 363h1v1h-1zM871 501h1v1h-1zM871 570h1v1h-1zM871 639h1v1h-1zM886 225h1v1h-1zM886 294h1v1h-1zM886 363h1v1h-1zM886 501h1v1h-1zM886 570h1v1h-1zM886 639h1v1h-1zM900 170h1v1h-1zM900 184h1v1h-1zM900 198h1v1h-1zM900 211h1v1h-1zM900 225h1v1h-1zM900 239h1v1h-1zM900 253h1v1h-1zM900 267h1v1h-1zM900 280h1v1h-1zM900 294h1v1h-1zM900 308h1v1h-1zM900 322h1v1h-1zM900 335h1v1h-1zM900 349h1v1h-1zM900 363h1v1h-1zM900 377h1v1h-1zM900 391h1v1h-1zM900 404h1v1h-1zM900 418h1v1h-1zM900 432h1v1h-1zM900 446h1v1h-1zM900 460h1v1h-1zM900 473h1v1h-1zM900 487h1v1h-1zM900 501h1v1h-1zM900 515h1v1h-1zM900 529h1v1h-1zM900 542h1v1h-1zM900 556h1v1h-1zM900 570h1v1h-1zM900 584h1v1h-1zM900 597h1v1h-1zM900 611h1v1h-1zM900 625h1v1h-1zM900 639h1v1h-1zM900 653h1v1h-1zM900 666h1v1h-1zM900 680h1v1h-1zM900 694h1v1h-1zM915 225h1v1h-1zM915 294h1v1h-1zM915 363h1v1h-1zM915 501h1v1h-1zM915 570h1v1h-1zM915 639h1v1h-1zM930 225h1v1h-1zM930 294h1v1h-1zM930 363h1v1h-1zM930 501h1v1h-1zM930 570h1v1h-1zM930 639h1v1h-1zM945 225h1v1h-1zM945 294h1v1h-1zM945 363h1v1h-1zM945 501h1v1h-1zM945 570h1v1h-1zM945 639h1v1h-1zM959 225h1v1h-1zM959 294h1v1h-1zM959 363h1v1h-1zM959 501h1v1h-1zM959 570h1v1h-1zM959 639h1v1h-1z" fill="#9c9c9c"/><rect x="606" y="158" width="1" height="547" fill="#c4c4c4"/><rect x="239" y="432" width="734" height="1" fill="#c4c4c4"/><rect x="604" y="170" width="5" height="1" fill="#c4c4c4"/><rect x="604" y="184" width="5" height="1" fill="#c4c4c4"/><rect x="604" y="198" width="5" height="1" fill="#c4c4c4"/><rect x="604" y="211" width="5" height="1" fill="#c4c4c4"/><rect x="604" y="225" width="5" height="1" fill="#c4c4c4"/><rect x="604" y="239" width="5" height="1" fill="#c4c4c4"/><rect x="604" y="253" width="5" height="1" fill="#c4c4c4"/><rect x="604" y="267" width="5" height="1" fill="#c4c4c4"/><rect x="604" y="280" width="5" height="1" fill="#c4c4c4"/><rect x="604" y="294" width="5" height="1" fill="#c4c4c4"/><rect x="604" y="308" width="5" height="1" fill="#c4c4c4"/><rect x="604" y="322" width="5" height="1" fill="#c4c4c4"/><rect x="604" y="335" width="5" height="1" fill="#c4c4c4"/><rect x="604" y="349" width="5" height="1" fill="#c4c4c4"/><rect x="604" y="363" width="5" height="1" fill="#c4c4c4"/><rect x="604" y="377" width="5" height="1" fill="#c4c4c4"/><rect x="604" y="391" width="5" height="1" fill="#c4c4c4"/><rect x="604" y="404" width="5" height="1" fill="#c4c4c4"/><rect x="604" y="418" width="5" height="1" fill="#c4c4c4"/><rect x="604" y="446" width="5" height="1" fill="#c4c4c4"/><rect x="604" y="460" width="5" height="1" fill="#c4c4c4"/><rect x="604" y="473" width="5" height="1" fill="#c4c4c4"/><rect x="604" y="487" width="5" height="1" fill="#c4c4c4"/><rect x="604" y="501" width="5" height="1" fill="#c4c4c4"/><rect x="604" y="515" width="5" height="1" fill="#c4c4c4"/><rect x="604" y="529" width="5" height="1" fill="#c4c4c4"/><rect x="604" y="542" width="5" height="1" fill="#c4c4c4"/><rect x="604" y="556" width="5" height="1" fill="#c4c4c4"/><rect x="604" y="570" width="5" height="1" fill="#c4c4c4"/><rect x="604" y="584" width="5" height="1" fill="#c4c4c4"/><rect x="604" y="597" width="5" height="1" fill="#c4c4c4"/><rect x="604" y="611" width="5" height="1" fill="#c4c4c4"/><rect x="604" y="625" width="5" height="1" fill="#c4c4c4"/><rect x="604" y="639" width="5" height="1" fill="#c4c4c4"/><rect x="604" y="653" width="5" height="1" fill="#c4c4c4"/><rect x="604" y="666" width="5" height="1" fill="#c4c4c4"/><rect x="604" y="680" width="5" height="1" fill="#c4c4c4"/><rect x="604" y="694" width="5" height="1" fill="#c4c4c4"/><rect x="252" y="430" width="1" height="5" fill="#c4c4c4"/><rect x="266" y="430" width="1" height="5" fill="#c4c4c4"/><rect x="281" y="430" width="1" height="5" fill="#c4c4c4"/><rect x="296" y="430" width="1" height="5" fill="#c4c4c4"/><rect x="311" y="430" width="1" height="5" fill="#c4c4c4"/><rect x="325" y="430" width="1" height="5" fill="#c4c4c4"/><rect x="340" y="430" width="1" height="5" fill="#c4c4c4"/><rect x="355" y="430" width="1" height="5" fill="#c4c4c4"/><rect x="370" y="430" width="1" height="5" fill="#c4c4c4"/><rect x="384" y="430" width="1" height="5" fill="#c4c4c4"/><rect x="399" y="430" width="1" height="5" fill="#c4c4c4"/><rect x="414" y="430" width="1" height="5" fill="#c4c4c4"/><rect x="429" y="430" width="1" height="5" fill="#c4c4c4"/><rect x="443" y="430" width="1" height="5" fill="#c4c4c4"/><rect x="458" y="430" width="1" height="5" fill="#c4c4c4"/><rect x="473" y="430" width="1" height="5" fill="#c4c4c4"/><rect x="488" y="430" width="1" height="5" fill="#c4c4c4"/><rect x="502" y="430" width="1" height="5" fill="#c4c4c4"/><rect x="517" y="430" width="1" height="5" fill="#c4c4c4"/><rect x="532" y="430" width="1" height="5" fill="#c4c4c4"/><rect x="547" y="430" width="1" height="5" fill="#c4c4c4"/><rect x="561" y="430" width="1" height="5" fill="#c4c4c4"/><rect x="576" y="430" width="1" height="5" fill="#c4c4c4"/><rect x="591" y="430" width="1" height="5" fill="#c4c4c4"/><rect x="620" y="430" width="1" height="5" fill="#c4c4c4"/><rect x="635" y="430" width="1" height="5" fill="#c4c4c4"/><rect x="650" y="430" width="1" height="5" fill="#c4c4c4"/><rect x="664" y="430" width="1" height="5" fill="#c4c4c4"/><rect x="679" y="430" width="1" height="5" fill="#c4c4c4"/><rect x="694" y="430" width="1" height="5" fill="#c4c4c4"/><rect x="709" y="430" width="1" height="5" fill="#c4c4c4"/><rect x="723" y="430" width="1" height="5" fill="#c4c4c4"/><rect x="738" y="430" width="1" height="5" fill="#c4c4c4"/><rect x="753" y="430" width="1" height="5" fill="#c4c4c4"/><rect x="768" y="430" width="1" height="5" fill="#c4c4c4"/><rect x="782" y="430" width="1" height="5" fill="#c4c4c4"/><rect x="797" y="430" width="1" height="5" fill="#c4c4c4"/><rect x="812" y="430" width="1" height="5" fill="#c4c4c4"/><rect x="827" y="430" width="1" height="5" fill="#c4c4c4"/><rect x="841" y="430" width="1" height="5" fill="#c4c4c4"/><rect x="856" y="430" width="1" height="5" fill="#c4c4c4"/><rect x="871" y="430" width="1" height="5" fill="#c4c4c4"/><rect x="886" y="430" width="1" height="5" fill="#c4c4c4"/><rect x="900" y="430" width="1" height="5" fill="#c4c4c4"/><rect x="915" y="430" width="1" height="5" fill="#c4c4c4"/><rect x="930" y="430" width="1" height="5" fill="#c4c4c4"/><rect x="945" y="430" width="1" height="5" fill="#c4c4c4"/><rect x="959" y="430" width="1" height="5" fill="#c4c4c4"/><rect x="311" y="158" width="1" height="2" fill="#ddd"/><rect x="311" y="703" width="1" height="2" fill="#ddd"/><rect x="384" y="158" width="1" height="2" fill="#ddd"/><rect x="384" y="703" width="1" height="2" fill="#ddd"/><rect x="458" y="158" width="1" height="2" fill="#ddd"/><rect x="458" y="703" width="1" height="2" fill="#ddd"/><rect x="532" y="158" width="1" height="2" fill="#ddd"/><rect x="532" y="703" width="1" height="2" fill="#ddd"/><rect x="606" y="158" width="1" height="2" fill="#ddd"/><rect x="606" y="703" width="1" height="2" fill="#ddd"/><rect x="679" y="158" width="1" height="2" fill="#ddd"/><rect x="679" y="703" width="1" height="2" fill="#ddd"/><rect x="753" y="158" width="1" height="2" fill="#ddd"/><rect x="753" y="703" width="1" height="2" fill="#ddd"/><rect x="827" y="158" width="1" height="2" fill="#ddd"/><rect x="827" y="703" width="1" height="2" fill="#ddd"/><rect x="900" y="158" width="1" height="2" fill="#ddd"/><rect x="900" y="703" width="1" height="2" fill="#ddd"/><rect x="239" y="225" width="2" height="1" fill="#ddd"/><rect x="971" y="225" width="2" height="1" fill="#ddd"/><rect x="239" y="294" width="2" height="1" fill="#ddd"/><rect x="971" y="294" width="2" height="1" fill="#ddd"/><rect x="239" y="363" width="2" height="1" fill="#ddd"/><rect x="971" y="363" width="2" height="1" fill="#ddd"/><rect x="239" y="432" width="2" height="1" fill="#ddd"/><rect x="971" y="432" width="2" height="1" fill="#ddd"/><rect x="239" y="501" width="2" height="1" fill="#ddd"/><rect x="971" y="501" width="2" height="1" fill="#ddd"/><rect x="239" y="570" width="2" height="1" fill="#ddd"/><rect x="971" y="570" width="2" height="1" fill="#ddd"/><rect x="239" y="639" width="2" height="1" fill="#ddd"/><rect x="971" y="639" width="2" height="1" fill="#ddd"/><path d="M239 419h3v5h-3zM242 423h4v1h-4zM246 423h8v4h-8zM254 424h1v3h-1zM255 426h3v1h-3zM258 424h1v3h-1zM259 426h7v1h-7zM266 426h14v3h-14zM280 428h4v1h-4zM284 426h2v3h-2zM286 428h2v1h-2zM288 426h2v3h-2zM290 428h20v1h-20zM310 426h11v3h-11zM321 387h1v42h-1zM322 248h1v140h-1zM323 241h1v8h-1zM324 231h1v11h-1zM325 222h1v10h-1zM326 216h1v7h-1zM327 210h1v7h-1zM328 205h1v6h-1zM329 199h1v7h-1zM330 199h1v180h-1zM331 318h1v31h-1zM332 324h1v46h-1zM333 369h1v10h-1zM334 378h1v11h-1zM335 387h1v8h-1zM336 393h1v4h-1zM337 395h1v11h-1zM338 405h1v4h-1zM339 408h1v6h-1zM340 413h1v3h-1zM341 414h1v3h-1zM342 416h1v2h-1zM343 417h1v1h-1zM344 417h5v2h-5zM349 417h1v4h-1zM350 416h1v5h-1zM351 420h1v1h-1zM352 419h6v5h-6zM358 423h4v1h-4zM362 423h8v4h-8zM370 424h1v3h-1zM371 426h3v1h-3zM374 424h1v3h-1zM375 426h7v1h-7zM382 426h14v3h-14zM396 428h4v1h-4zM400 426h2v3h-2zM402 428h2v1h-2zM404 426h2v3h-2zM406 428h20v1h-20zM426 426h11v3h-11zM437 387h1v42h-1zM438 248h1v140h-1zM439 241h1v8h-1zM440 231h1v11h-1zM441 222h1v10h-1zM442 216h1v7h-1zM443 210h1v7h-1zM444 205h1v6h-1zM445 199h1v7h-1zM446 199h1v180h-1zM447 318h1v31h-1zM448 324h1v46h-1zM449 369h1v10h-1zM450 378h1v11h-1zM451 387h1v8h-1zM452 393h1v4h-1zM453 395h1v11h-1zM454 405h1v4h-1zM455 408h1v6h-1zM456 413h1v3h-1zM457 414h1v3h-1zM458 416h1v2h-1zM459 417h1v1h-1zM460 417h5v2h-5zM465 417h1v4h-1zM466 416h1v5h-1zM467 420h1v1h-1zM468 419h6v5h-6zM474 423h4v1h-4zM478 423h8v4h-8zM486 424h1v3h-1zM487 426h3v1h-3zM490 424h1v3h-1zM491 426h7v1h-7zM498 426h14v3h-14zM512 428h4v1h-4zM516 426h2v3h-2zM518 428h2v1h-2zM520 426h2v3h-2zM522 428h20v1h-20zM542 426h11v3h-11zM553 387h1v42h-1zM554 248h1v140h-1zM555 241h1v8h-1zM556 231h1v11h-1zM557 222h1v10h-1zM558 216h1v7h-1zM559 210h1v7h-1zM560 205h1v6h-1zM561 199h1v7h-1zM562 199h1v180h-1zM563 318h1v31h-1zM564 324h1v46h-1zM565 369h1v10h-1zM566 378h1v11h-1zM567 387h1v8h-1zM568 393h1v4h-1zM569 395h1v11h-1zM570 405h1v4h-1zM571 408h1v6h-1zM572 413h1v3h-1zM573 414h1v3h-1zM574 416h1v2h-1zM575 417h1v1h-1zM576 417h5v2h-5zM581 417h1v4h-1zM582 416h1v5h-1zM583 420h1v1h-1zM584 419h6v5h-6zM590 423h4v1h-4zM594 423h8v4h-8zM602 424h1v3h-1zM603 426h3v1h-3zM606 424h1v3h-1zM607 426h7v1h-7zM614 426h14v3h-14zM628 428h4v1h-4zM632 426h2v3h-2zM634 428h2v1h-2zM636 426h2v3h-2zM638 428h20v1h-20zM658 426h10v3h-10zM668 387h1v42h-1zM669 248h1v140h-1zM670 241h1v8h-1zM671 231h1v11h-1zM672 222h1v10h-1zM673 216h1v7h-1zM674 210h1v7h-1zM675 205h1v6h-1zM676 199h1v7h-1zM677 199h1v180h-1zM678 318h1v31h-1zM679 324h1v46h-1zM680 369h1v10h-1zM681 378h1v11h-1zM682 387h1v8h-1zM683 393h1v4h-1zM684 395h1v11h-1zM685 405h1v4h-1zM686 408h1v6h-1zM687 413h1v3h-1zM688 414h1v3h-1zM689 416h1v2h-1zM690 417h1v1h-1zM691 417h5v2h-5zM696 417h1v4h-1zM697 416h1v5h-1zM698 420h1v1h-1zM699 419h6v5h-6zM705 423h4v1h-4zM709 423h8v4h-8zM717 424h1v3h-1zM718 426h3v1h-3zM721 424h1v3h-1zM722 426h7v1h-7zM729 426h14v3h-14zM743 428h4v1h-4zM747 426h2v3h-2zM749 428h2v1h-2zM751 426h2v3h-2zM753 428h20v1h-20zM773 426h11v3h-11zM784 387h1v42h-1zM785 248h1v140h-1zM786 241h1v8h-1zM787 231h1v11h-1zM788 222h1v10h-1zM789 216h1v7h-1zM790 210h1v7h-1zM791 205h1v6h-1zM792 199h1v7h-1zM793 199h1v180h-1zM794 318h1v31h-1zM795 324h1v46h-1zM796 369h1v10h-1zM797 378h1v11h-1zM798 387h1v8h-1zM799 393h1v4h-1zM800 395h1v11h-1zM801 405h1v4h-1zM802 408h1v6h-1zM803 413h1v3h-1zM804 414h1v3h-1zM805 416h1v2h-1zM806 417h1v1h-1zM807 417h5v2h-5zM812 417h1v4h-1zM813 416h1v5h-1zM814 420h1v1h-1zM815 419h6v5h-6zM821 423h4v1h-4zM825 423h8v4h-8zM833 424h1v3h-1zM834 426h3v1h-3zM837 424h1v3h-1zM838 426h7v1h-7zM845 426h14v3h-14zM859 428h4v1h-4zM863 426h2v3h-2zM865 428h2v1h-2zM867 426h2v3h-2zM869 428h20v1h-20zM889 426h11v3h-11zM900 387h1v42h-1zM901 248h1v140h-1zM902 241h1v8h-1zM903 231h1v11h-1zM904 222h1v10h-1zM905 216h1v7h-1zM906 210h1v7h-1zM907 205h1v6h-1zM908 199h1v7h-1zM909 199h1v180h-1zM910 318h1v31h-1zM911 324h1v46h-1zM912 369h1v10h-1zM913 378h1v11h-1zM914 387h1v8h-1zM915 393h1v4h-1zM916 395h1v11h-1zM917 405h1v4h-1zM918 408h1v6h-1zM919 413h1v3h-1zM920 414h1v3h-1zM921 416h1v2h-1zM922 417h1v1h-1zM923 417h5v2h-5zM928 417h1v4h-1zM929 416h1v5h-1zM930 420h1v1h-1zM931 419h6v5h-6zM937 423h4v1h-4zM941 423h8v4h-8zM949 424h1v3h-1zM950 426h3v1h-3zM953 424h1v3h-1zM954 426h7v1h-7zM961 426h13v3h-13z" fill="#f6f048"/><path d="M239 631h4v3h-4zM243 633h8v1h-8zM251 633h19v5h-19zM270 637h12v1h-12zM282 637h27v4h-27zM309 637h9v1h-9zM318 633h3v5h-3zM321 618h1v20h-1zM322 557h1v62h-1zM323 563h1v19h-1zM324 581h1v12h-1zM325 592h1v10h-1zM326 601h1v9h-1zM327 609h1v9h-1zM328 617h1v5h-1zM329 620h1v3h-1zM330 529h1v94h-1zM331 531h1v4h-1zM332 534h1v48h-1zM333 581h1v10h-1zM334 590h1v9h-1zM335 598h1v6h-1zM336 603h1v5h-1zM337 607h1v10h-1zM338 616h1v4h-1zM339 619h1v3h-1zM340 621h1v2h-1zM341 622h3v6h-3zM344 627h3v3h-3zM347 629h6v3h-6zM353 631h1v1h-1zM354 631h5v3h-5zM359 633h8v1h-8zM367 633h19v5h-19zM386 637h12v1h-12zM398 637h27v4h-27zM425 637h9v1h-9zM434 633h3v5h-3zM437 618h1v20h-1zM438 557h1v62h-1zM439 563h1v19h-1zM440 581h1v12h-1zM441 592h1v10h-1zM442 601h1v9h-1zM443 609h1v9h-1zM444 617h1v5h-1zM445 620h1v3h-1zM446 529h1v94h-1zM447 531h1v4h-1zM448 534h1v48h-1zM449 581h1v10h-1zM450 590h1v9h-1zM451 598h1v6h-1zM452 603h1v5h-1zM453 607h1v10h-1zM454 616h1v4h-1zM455 619h1v3h-1zM456 621h1v2h-1zM457 622h3v6h-3zM460 627h3v3h-3zM463 629h6v3h-6zM469 631h1v1h-1zM470 631h5v3h-5zM475 633h8v1h-8zM483 633h19v5h-19zM502 637h12v1h-12zM514 637h27v4h-27zM541 637h9v1h-9zM550 633h3v5h-3zM553 618h1v20h-1zM554 557h1v62h-1zM555 563h1v19h-1zM556 581h1v12h-1zM557 592h1v10h-1zM558 601h1v9h-1zM559 609h1v9h-1zM560 617h1v5h-1zM561 620h1v3h-1zM562 529h1v94h-1zM563 531h1v4h-1zM564 534h1v48h-1zM565 581h1v10h-1zM566 590h1v9h-1zM567 598h1v6h-1zM568 603h1v5h-1zM569 607h1v10h-1zM570 616h1v4h-1zM571 619h1v3h-1zM572 621h1v2h-1zM573 622h3v6h-3zM576 627h3v3h-3zM579 629h6v3h-6zM585 631h1v1h-1zM586 631h5v3h-5zM591 633h8v1h-8zM599 633h19v5h-19zM618 637h12v1h-12zM630 637h27v4h-27zM657 637h9v1h-9zM666 633h2v5h-2zM668 618h1v20h-1zM669 557h1v62h-1zM670 563h1v19h-1zM671 581h1v12h-1zM672 592h1v10h-1zM673 601h1v9h-1zM674 609h1v9h-1zM675 617h1v5h-1zM676 620h1v3h-1zM677 529h1v94h-1zM678 531h1v4h-1zM679 534h1v48h-1zM680 581h1v10h-1zM681 590h1v9h-1zM682 598h1v6h-1zM683 603h1v5h-1zM684 607h1v10h-1zM685 616h1v4h-1zM686 619h1v3h-1zM687 621h1v2h-1zM688 622h3v6h-3zM691 627h3v3h-3zM694 629h6v3h-6zM700 631h1v1h-1zM701 631h5v3h-5zM706 633h8v1h-8zM714 633h19v5h-19zM733 637h12v1h-12zM745 637h27v4h-27zM772 637h9v1h-9zM781 633h3v5h-3zM784 618h1v20h-1zM785 557h1v62h-1zM786 563h1v19h-1zM787 581h1v12h-1zM788 592h1v10h-1zM789 601h1v9h-1zM790 609h1v9h-1zM791 617h1v5h-1zM792 620h1v3h-1zM793 529h1v94h-1zM794 531h1v4h-1zM795 534h1v48h-1zM796 581h1v10h-1zM797 590h1v9h-1zM798 598h1v6h-1zM799 603h1v5h-1zM800 607h1v10h-1zM801 616h1v4h-1zM802 619h1v3h-1zM803 621h1v2h-1zM804 622h3v6h-3zM807 627h3v3h-3zM810 629h6v3h-6zM816 631h1v1h-1zM817 631h5v3h-5zM822 633h8v1h-8zM830 633h19v5h-19zM849 637h12v1h-12zM861 637h27v4h-27zM888 637h9v1h-9zM897 633h3v5h-3zM900 618h1v20h-1zM901 557h1v62h-1zM902 563h1v19h-1zM903 581h1v12h-1zM904 592h1v10h-1zM905 601h1v9h-1zM906 609h1v9h-1zM907 617h1v5h-1zM908 620h1v3h-1zM909 529h1v94h-1zM910 531h1v4h-1zM911 534h1v48h-1zM912 581h1v10h-1zM913 590h1v9h-1zM914 598h1v6h-1zM915 603h1v5h-1zM916 607h1v10h-1zM917 616h1v4h-1zM918 619h1v3h-1zM919 621h1v2h-1zM920 622h3v6h-3zM923 627h3v3h-3zM926 629h6v3h-6zM932 631h1v1h-1zM933 631h5v3h-5zM938 633h8v1h-8zM946 633h19v5h-19zM965 637h9v1h-9z" fill="#28ee28"/></svg><svg style="position:absolute;left:0;top:0" width="1280" height="800"><path d="M218 175h12l5.5 5.5l-5.5 5.5h-12z" fill="#ffff00" stroke="#403c00" stroke-width="0.8"/><path d="M218 376.5h12l5.5 5.5l-5.5 5.5h-12z" fill="#00ff00" stroke="#003c00" stroke-width="0.8"/><path d="M994 201h-11l-6 5.5l6 5.5h11z" fill="#ffff00" stroke="#403c00" stroke-width="0.8"/><path d="M893.5 131.5h6v-16h4.5" fill="none" stroke="#e8e850" stroke-width="1"/><path d="M895 125.5l4.5-4.5l4.5 4.5z" fill="#f4f020"/><path d="M267 723.5h10" stroke="#e4e448" stroke-width="1"/><path d="M267 719.5h10" stroke="#e4e448" stroke-width="1" stroke-dasharray="2 1.5"/><path d="M407 723.5h10" stroke="#30e030" stroke-width="1"/><path d="M407 719.5h10" stroke="#30e030" stroke-width="1" stroke-dasharray="2 1.5"/></svg>
<span class="t" style="left:223.00px;top:176.00px;font-size:11px;color:#000;font-weight:bold;">1</span>
<span class="t" style="left:223.00px;top:377.00px;font-size:11px;color:#000;font-weight:bold;">2</span>
<span class="t" style="left:985.00px;top:202.00px;font-size:11px;color:#303000;">T</span>
<div class="a" style="left:210px;top:81px;width:791px;height:24px;background:linear-gradient(#f6f2f5 0,#f6f2f5 22px,#fdfbff 23px)"></div><div class="a" style="left:209px;top:81px;width:2px;height:24px;background:linear-gradient(90deg,#b4b4be,#e8e6ee)"></div><svg class="a" style="left:210px;top:80px" width="800" height="27" viewBox="210 80 800 27"><defs><linearGradient id="tb" x1="0" y1="0" x2="0" y2="1"><stop offset="0" stop-color="#fffaa8"/><stop offset=".46" stop-color="#ffea72"/><stop offset=".52" stop-color="#fcd96e"/><stop offset="1" stop-color="#fbd773"/></linearGradient></defs><path d="M227.500 106.500l24-24h52.500a2 2 0 0 1 2 2v22z" fill="url(#tb)" stroke="#8c8a84" stroke-width="1"/><rect x="228.500" y="105" width="77" height="2" fill="#fbd772"/><path d="M220.500 88.500v8l-4.500-4z" fill="#f6f2f5" stroke="#000" stroke-width="1.15"/><path d="M984 88.500v8l4.500-4z" fill="#f6f2f5" stroke="#000" stroke-width="1.15"/></svg><span class="t" style="left:262.30px;top:88.00px;font-size:12px;color:#000;font-weight:bold;letter-spacing:-0.462px;">Scope</span>
<div class="a" style="left:1000px;top:81px;width:1px;height:658px;background:#a4a4ae"></div><div class="a" style="left:1001px;top:81px;width:4px;height:658px;background:#f1eff6"></div><div class="a" style="left:1005px;top:81px;width:275px;height:42px;background:linear-gradient(#cbd8e8 0px,#d3deec 10px,#e2e9f3 19px,#e6ecf8 42px)"></div><span class="t" style="left:1009.50px;top:84.00px;font-size:12.5px;color:#56626f;letter-spacing:-0.326px;">Control Panel</span><svg class="a" style="left:1249px;top:85px" width="10" height="10"><path d="M2.5 1.5h4v4.5h-4zM5.5 1.5v4.5M1 6.5h7M4.5 6.5v3" fill="none" stroke="#000" stroke-width="1"/></svg><svg class="a" style="left:1265.5px;top:85px" width="10" height="10"><path d="M1 1.700l7.200 6.400M8.200 1.700l-7.200 6.400" stroke="#000" stroke-width="1.700"/></svg><div class="cb" style="left:1005px;top:100px;width:274.5px;height:23px"></div><span class="t" style="left:1009.50px;top:106.00px;font-size:12px;color:#000;letter-spacing:-0.505px;">Scope</span><div class="arr" style="left:1267px;top:110px"></div><div class="a" style="left:1005px;top:123px;width:275px;height:25px;background:linear-gradient(#f9f8ff 0%,#f6f6fe 30%,#e6e6f0 48%,#d0d1e2 66%,#bebdd5 84%,#b4b2cc 100%)"></div><div class="a" style="left:1005px;top:148px;width:275px;height:590px;overflow:hidden;background:#f6f2f6"><div class="a" style="left:-1005px;top:-148px;width:1280px;height:800px"><div class="grp" style="left:1010px;top:159px;width:203px;height:118px"></div><div class="a" style="left:1084px;top:155px;width:56px;height:10px;background:#f6f2f6"></div><span class="t" style="left:1088.30px;top:154.00px;font-size:10.5px;color:#000;letter-spacing:0.073px;">Horizontal</span><span class="t" style="left:1020.50px;top:174.00px;font-size:10.5px;color:#000;letter-spacing:-0.233px;">Time/DIV</span><div class="cb" style="left:1019px;top:191px;width:74px;height:22px"></div><span class="t" style="left:1024.00px;top:197.00px;font-size:10.5px;color:#000;letter-spacing:-0.039px;">1.000ms</span><div class="arr" style="left:1080px;top:200.5px"></div><span class="t" style="left:1020.60px;top:224.00px;font-size:10.5px;color:#000;letter-spacing:-0.142px;">Format</span><div class="cb" style="left:1019px;top:243px;width:74px;height:22px"></div><span class="t" style="left:1023.40px;top:249.00px;font-size:10.5px;color:#000;letter-spacing:0.217px;">Y-T</span><div class="arr" style="left:1080px;top:252.5px"></div><svg class="a" style="left:1108.8px;top:180.8px" width="90" height="84" viewBox="1108.8 180.8 90 84"><ellipse cx="1153.8" cy="222.8" rx="37.2" ry="34.6" fill="#fff" stroke="#000" stroke-width="1"/><ellipse cx="1153.8" cy="222.8" rx="34.7" ry="32.3" fill="#d0d0d0" stroke="#000" stroke-width="1"/><path d="M1178.40 200.71A34.2 31.8 0 0 1 1130.04 245.68z" fill="#b2b2b2"/><ellipse cx="1153.7" cy="224.2" rx="28.5" ry="27.4" fill="#0000cd" stroke="#1c1c1c" stroke-width="0.8"/><path d="M1157.3 201.3L1155 218.8" stroke="#fff" stroke-width="1.7"/><path d="M1130 247.8l-7.5 6.6M1178 248l7 6.4" stroke="#000" stroke-width="1.3"/></svg><div class="grp" style="left:1010px;top:296.5px;width:203px;height:283.5px"></div><div class="a" style="left:1090px;top:292px;width:44px;height:10px;background:#f6f2f6"></div><span class="t" style="left:1094.50px;top:291.00px;font-size:10.5px;color:#000;letter-spacing:0.171px;">Vertical</span><div class="chk" style="left:1019px;top:313.5px"><i></i></div><svg class="a" style="left:1019px;top:313.5px" width="13" height="13"><path d="M3 6.2l2.4 3.2l4.2-6.6" fill="none" stroke="#3a4c90" stroke-width="1.9"/></svg><span class="t" style="left:1035.80px;top:315.00px;font-size:10.5px;color:#000;letter-spacing:-0.835px;">CH1</span><div class="cb" style="left:1019px;top:334px;width:74px;height:22px"></div><span class="t" style="left:1023.40px;top:340.00px;font-size:10.5px;color:#000;letter-spacing:0.232px;">1.00V</span><div class="arr" style="left:1080px;top:343.5px"></div><div class="cb dis" style="left:1019px;top:369px;width:74px;height:22px"></div><span class="t" style="left:1023.40px;top:375.00px;font-size:10.5px;color:#a8a8b0;letter-spacing:-0.633px;">DC</span><div class="arr dis" style="left:1080px;top:378.5px"></div><div class="cb" style="left:1019px;top:404px;width:74px;height:22px"></div><span class="t" style="left:1023.40px;top:409.00px;font-size:10.5px;color:#000;letter-spacing:0.055px;">x1</span><div class="arr" style="left:1080px;top:413.5px"></div><svg class="a" style="left:1108.8px;top:315.8px" width="90" height="84" viewBox="1108.8 315.8 90 84"><ellipse cx="1153.8" cy="357.8" rx="37.2" ry="34.6" fill="#fff" stroke="#000" stroke-width="1"/><ellipse cx="1153.8" cy="357.8" rx="34.7" ry="32.3" fill="#d0d0d0" stroke="#000" stroke-width="1"/><path d="M1178.40 335.71A34.2 31.8 0 0 1 1130.04 380.68z" fill="#b2b2b2"/><ellipse cx="1153.7" cy="359.2" rx="28.5" ry="27.4" fill="#ffff00" stroke="#1c1c1c" stroke-width="0.8"/><path d="M1134.7 345.5L1148.6 355.1" stroke="#f4f0a8" stroke-width="1.7"/><path d="M1130 382.8l-7.5 6.6M1178 383l7 6.4" stroke="#000" stroke-width="1.3"/></svg><div class="chk" style="left:1130px;top:411px"><i></i></div><span class="t" style="left:1146.30px;top:413.00px;font-size:10.5px;color:#000;letter-spacing:0.073px;">Invert</span><div class="chk" style="left:1019px;top:453.5px"><i></i></div><svg class="a" style="left:1019px;top:453.5px" width="13" height="13"><path d="M3 6.2l2.4 3.2l4.2-6.6" fill="none" stroke="#3a4c90" stroke-width="1.9"/></svg><span class="t" style="left:1035.80px;top:455.00px;font-size:10.5px;color:#000;letter-spacing:-0.835px;">CH2</span><div class="cb" style="left:1019px;top:474px;width:74px;height:22px"></div><span class="t" style="left:1023.40px;top:480.00px;font-size:10.5px;color:#000;letter-spacing:0.232px;">1.00V</span><div class="arr" style="left:1080px;top:483.5px"></div><div class="cb dis" style="left:1019px;top:509px;width:74px;height:22px"></div><span class="t" style="left:1023.40px;top:515.00px;font-size:10.5px;color:#a8a8b0;letter-spacing:-0.633px;">DC</span><div class="arr dis" style="left:1080px;top:518.5px"></div><div class="cb" style="left:1019px;top:544px;width:74px;height:22px"></div><span class="t" style="left:1023.40px;top:549.00px;font-size:10.5px;color:#000;letter-spacing:0.055px;">x1</span><div class="arr" style="left:1080px;top:553.5px"></div><svg class="a" style="left:1108.8px;top:458.4px" width="90" height="84" viewBox="1108.8 458.4 90 84"><ellipse cx="1153.8" cy="500.4" rx="37.2" ry="34.6" fill="#fff" stroke="#000" stroke-width="1"/><ellipse cx="1153.8" cy="500.4" rx="34.7" ry="32.3" fill="#d0d0d0" stroke="#000" stroke-width="1"/><path d="M1178.40 478.31A34.2 31.8 0 0 1 1130.04 523.28z" fill="#b2b2b2"/><ellipse cx="1153.7" cy="501.8" rx="28.5" ry="27.4" fill="#00ff00" stroke="#1c1c1c" stroke-width="0.8"/><path d="M1134.7 487.3L1148.1 496.9" stroke="#d8f8d0" stroke-width="1.7"/><path d="M1130 525.4l-7.5 6.6M1178 525.6l7 6.4" stroke="#000" stroke-width="1.3"/></svg><div class="chk" style="left:1130px;top:551px"><i></i></div><span class="t" style="left:1146.30px;top:553.00px;font-size:10.5px;color:#000;letter-spacing:0.073px;">Invert</span><div class="grp" style="left:1010px;top:600px;width:203px;height:200px"></div><div class="a" style="left:1091px;top:596px;width:42px;height:10px;background:#f6f2f6"></div><span class="t" style="left:1095.20px;top:594.00px;font-size:10.5px;color:#000;letter-spacing:0.133px;">Trigger</span><span class="t" style="left:1022.80px;top:626.00px;font-size:10.5px;color:#000;letter-spacing:0.096px;">Trigger Mode</span><div class="cb" style="left:1119px;top:621px;width:74px;height:22px"></div><span class="t" style="left:1123.20px;top:627.00px;font-size:10.5px;color:#000;letter-spacing:-0.181px;">Edge</span><div class="arr" style="left:1180px;top:630.5px"></div><span class="t" style="left:1022.80px;top:661.00px;font-size:10.5px;color:#000;letter-spacing:0.293px;">Trigger Sweep</span><div class="cb" style="left:1119px;top:656px;width:74px;height:22px"></div><span class="t" style="left:1123.20px;top:662.00px;font-size:10.5px;color:#000;letter-spacing:-0.219px;">AUTO</span><div class="arr" style="left:1180px;top:665.5px"></div><span class="t" style="left:1022.80px;top:696.00px;font-size:10.5px;color:#000;letter-spacing:0.210px;">Trigger Source</span><div class="cb" style="left:1119px;top:691px;width:74px;height:22px"></div><span class="t" style="left:1123.20px;top:697.00px;font-size:10.5px;color:#000;letter-spacing:-0.802px;">CH1</span><div class="arr" style="left:1180px;top:700.5px"></div><span class="t" style="left:1022.80px;top:731.00px;font-size:10.5px;color:#000;letter-spacing:0.081px;">Trigger Slope</span><div class="cb" style="left:1119px;top:726px;width:74px;height:22px"></div><span class="t" style="left:1123.20px;top:732.00px;font-size:10.5px;color:#000;">+</span><div class="arr" style="left:1180px;top:735.5px"></div><div class="a" style="left:1264px;top:147px;width:16px;height:591px;background:#f1eff2"></div><div class="a" style="left:1264px;top:165px;width:15px;height:424px;box-sizing:border-box;border:1px solid #8f8f96;border-radius:2px;background:linear-gradient(90deg,#f3f3f5 0%,#ececef 42%,#d4d4d9 50%,#c8c8cd 100%)"></div><div class="a" style="left:1268px;top:373px;width:8px;height:7px;background:repeating-linear-gradient(#5c5c68 0 1px,#f0f0f4 1px 2px)"></div><svg class="a" style="left:1264px;top:147px" width="17" height="591"><path d="M4.500 11.500l4-4.500l4 4.500z" fill="#1c1c22"/><path d="M4.800 582l3.700 4l3.700-4z" fill="#6c6c74"/></svg></div></div>
<div class="a" style="left:0;top:738px;width:1280px;height:2px;background:linear-gradient(#8c8b8e,#9d9c9f)"></div>
<div class="a" style="left:0;top:740px;width:1280px;height:20px;background:linear-gradient(#fdfbfb 0,#f5eeee 1.5px)"></div>
<span class="t" style="left:4.00px;top:745.00px;font-size:12px;color:#000;letter-spacing:-0.070px;">Running...</span>
<span class="t" style="left:1176.00px;top:745.00px;font-size:12px;color:#000;letter-spacing:-0.475px;">01-03-2016  22:34</span>
<div class="a" style="left:0;top:760px;width:1280px;height:40px;background:linear-gradient(90deg,#8098b8 0,#8aa2c2 50px,#94aece 100px,#a1bddc 150px,#a5c2e0 220px,#a5c2e0 960px,#98b2d2 985px,#8198b8 1005px,#7c94b4 1015px)"></div><div class="a" style="left:0;top:760px;width:1280px;height:1px;background:#3a4759"></div><div class="a" style="left:0;top:761px;width:1280px;height:1px;background:rgba(255,255,255,.3)"></div><div class="a" style="left:131px;top:761px;width:4px;height:38.5px;box-sizing:border-box;border:1px solid #44546a;border-left:none;border-radius:0 3px 3px 0;background:#b4c9e2"></div><div class="a" style="left:75.5px;top:761px;width:55px;height:38.5px;box-sizing:border-box;border:1px solid #44546a;border-radius:3px;background:linear-gradient(135deg,#c4d5ea 0%,#b4c9e2 45%,#a6bfdc 55%,#afc6e0 100%);box-shadow:inset 0 0 0 1px rgba(255,255,255,.55)"></div><div class="a" style="left:199.5px;top:761px;width:59px;height:38.5px;box-sizing:border-box;border:1px solid #44546a;border-radius:3px;background:linear-gradient(135deg,#c4d5ea 0%,#b4c9e2 45%,#a6bfdc 55%,#afc6e0 100%);box-shadow:inset 0 0 0 1px rgba(255,255,255,.55)"></div><div class="a" style="left:261.5px;top:761px;width:59px;height:38.5px;box-sizing:border-box;border:1px solid #44546a;border-radius:3px;background:linear-gradient(135deg,#c4d5ea 0%,#b4c9e2 45%,#a6bfdc 55%,#afc6e0 100%);box-shadow:inset 0 0 0 1px rgba(255,255,255,.55)"></div><div class="a" style="left:385.5px;top:761px;width:59px;height:38.5px;box-sizing:border-box;border:1px solid #44546a;border-radius:3px;background:linear-gradient(135deg,#c4d5ea 0%,#b4c9e2 45%,#a6bfdc 55%,#afc6e0 100%);box-shadow:inset 0 0 0 1px rgba(255,255,255,.55)"></div><div class="a" style="left:447.5px;top:761px;width:59px;height:38.5px;box-sizing:border-box;border:1px solid #44546a;border-radius:3px;background:linear-gradient(135deg,#c4d5ea 0%,#b4c9e2 45%,#a6bfdc 55%,#afc6e0 100%);box-shadow:inset 0 0 0 1px rgba(255,255,255,.55)"></div><div class="a" style="left:509.5px;top:761px;width:59px;height:38.5px;box-sizing:border-box;border:1px solid #44546a;border-radius:3px;background:linear-gradient(135deg,#c4d5ea 0%,#b4c9e2 45%,#a6bfdc 55%,#afc6e0 100%);box-shadow:inset 0 0 0 1px rgba(255,255,255,.55)"></div><div class="a" style="left:323.5px;top:761px;width:59px;height:38.5px;box-sizing:border-box;border:1px solid #44546a;border-radius:3px;background:linear-gradient(135deg,#e6eef8 0%,#d2e0f0 40%,#c2d5ea 60%,#d0dff0 100%);box-shadow:inset 0 0 0 1px rgba(255,255,255,.55)"></div><svg class="a" style="left:0;top:760px" width="1280" height="40" viewBox="0 760 1280 40"><defs>
<radialGradient id="orb" cx=".5" cy=".95" r=".75"><stop offset="0" stop-color="#38d4f8"/><stop offset=".35" stop-color="#1080c4"/><stop offset=".7" stop-color="#0c4c84"/><stop offset="1" stop-color="#1c4470"/></radialGradient>
<linearGradient id="orbt" x1="0" y1="0" x2="0" y2="1"><stop offset="0" stop-color="#c4d4e4" stop-opacity=".95"/><stop offset="1" stop-color="#7ea0c4" stop-opacity=".75"/></linearGradient>
<radialGradient id="ff" cx=".45" cy=".4" r=".6"><stop offset="0" stop-color="#38a8e8"/><stop offset=".6" stop-color="#1858b0"/><stop offset="1" stop-color="#142c70"/></radialGradient>
<linearGradient id="ffo" x1="0" y1="0" x2="0" y2="1"><stop offset="0" stop-color="#f8c820"/><stop offset=".5" stop-color="#f07818"/><stop offset="1" stop-color="#d84a10"/></linearGradient>
<linearGradient id="sky" x1="0" y1="0" x2="0" y2="1"><stop offset="0" stop-color="#58a8e8"/><stop offset=".5" stop-color="#c8e4f4"/><stop offset=".55" stop-color="#3c7858"/><stop offset=".8" stop-color="#6090a8"/><stop offset="1" stop-color="#c8d8e0"/></linearGradient>
<linearGradient id="fold" x1="0" y1="0" x2="0" y2="1"><stop offset="0" stop-color="#fdf0b4"/><stop offset="1" stop-color="#f4d878"/></linearGradient>
<linearGradient id="wd" x1="0" y1="0" x2="1" y2="1"><stop offset="0" stop-color="#4878c8"/><stop offset="1" stop-color="#183c90"/></linearGradient>
<linearGradient id="sd" x1="0" y1="0" x2="1" y2="1"><stop offset="0" stop-color="#a4aebe"/><stop offset=".5" stop-color="#76849a"/><stop offset="1" stop-color="#5e6a7e"/></linearGradient>
</defs><circle cx="27" cy="780" r="18" fill="url(#orb)" stroke="#24486e" stroke-width="1"/><path d="M9.500 781a17.500 17.500 0 0 1 35 0c-10 -4.500 -25 -4.500 -35 0z" fill="url(#orbt)"/><circle cx="27" cy="780" r="17.300" fill="none" stroke="#a8c8e8" stroke-opacity=".6" stroke-width=".8"/><path d="M18.500 770.500c3-1.800 6-1.800 9 -.300l-1.800 8.200c-3-1.500-6-1.500-9 .300z" fill="#e8541c"/><path d="M29 770.800c3 1.500 6 1.500 9.500 -.300l-1.800 8.600c-3.500 1.800-6.500 1.800-9.500 .300z" fill="#7cb838"/><path d="M16.300 780c3-1.800 6-1.800 9 -.300l-1.800 8.200c-3-1.500-6-1.500-9 .300z" fill="#2c84d8"/><path d="M26.800 780.500c3 1.500 6 1.500 9.500 -.300l-1.800 8.600c-3.500 1.800-6.500 1.800-9.500 .300z" fill="#f8bc28"/><rect x="58" y="765" width="2" height="2" fill="#2c3a50"/><rect x="60" y="767" width="1" height="1" fill="#c4d4e8" fill-opacity=".6"/><rect x="61" y="765" width="2" height="2" fill="#2c3a50"/><rect x="63" y="767" width="1" height="1" fill="#c4d4e8" fill-opacity=".6"/><rect x="64" y="765" width="2" height="2" fill="#2c3a50"/><rect x="66" y="767" width="1" height="1" fill="#c4d4e8" fill-opacity=".6"/><rect x="58" y="769" width="2" height="2" fill="#2c3a50"/><rect x="60" y="771" width="1" height="1" fill="#c4d4e8" fill-opacity=".6"/><rect x="61" y="769" width="2" height="2" fill="#2c3a50"/><rect x="63" y="771" width="1" height="1" fill="#c4d4e8" fill-opacity=".6"/><rect x="64" y="769" width="2" height="2" fill="#2c3a50"/><rect x="66" y="771" width="1" height="1" fill="#c4d4e8" fill-opacity=".6"/><rect x="58" y="773" width="2" height="2" fill="#2c3a50"/><rect x="60" y="775" width="1" height="1" fill="#c4d4e8" fill-opacity=".6"/><rect x="61" y="773" width="2" height="2" fill="#2c3a50"/><rect x="63" y="775" width="1" height="1" fill="#c4d4e8" fill-opacity=".6"/><rect x="64" y="773" width="2" height="2" fill="#2c3a50"/><rect x="66" y="775" width="1" height="1" fill="#c4d4e8" fill-opacity=".6"/><rect x="58" y="777" width="2" height="2" fill="#2c3a50"/><rect x="60" y="779" width="1" height="1" fill="#c4d4e8" fill-opacity=".6"/><rect x="61" y="777" width="2" height="2" fill="#2c3a50"/><rect x="63" y="779" width="1" height="1" fill="#c4d4e8" fill-opacity=".6"/><rect x="64" y="777" width="2" height="2" fill="#2c3a50"/><rect x="66" y="779" width="1" height="1" fill="#c4d4e8" fill-opacity=".6"/><rect x="58" y="781" width="2" height="2" fill="#2c3a50"/><rect x="60" y="783" width="1" height="1" fill="#c4d4e8" fill-opacity=".6"/><rect x="61" y="781" width="2" height="2" fill="#2c3a50"/><rect x="63" y="783" width="1" height="1" fill="#c4d4e8" fill-opacity=".6"/><rect x="64" y="781" width="2" height="2" fill="#2c3a50"/><rect x="66" y="783" width="1" height="1" fill="#c4d4e8" fill-opacity=".6"/><rect x="58" y="785" width="2" height="2" fill="#2c3a50"/><rect x="60" y="787" width="1" height="1" fill="#c4d4e8" fill-opacity=".6"/><rect x="61" y="785" width="2" height="2" fill="#2c3a50"/><rect x="63" y="787" width="1" height="1" fill="#c4d4e8" fill-opacity=".6"/><rect x="64" y="785" width="2" height="2" fill="#2c3a50"/><rect x="66" y="787" width="1" height="1" fill="#c4d4e8" fill-opacity=".6"/><rect x="58" y="789" width="2" height="2" fill="#2c3a50"/><rect x="60" y="791" width="1" height="1" fill="#c4d4e8" fill-opacity=".6"/><rect x="61" y="789" width="2" height="2" fill="#2c3a50"/><rect x="63" y="791" width="1" height="1" fill="#c4d4e8" fill-opacity=".6"/><rect x="64" y="789" width="2" height="2" fill="#2c3a50"/><rect x="66" y="791" width="1" height="1" fill="#c4d4e8" fill-opacity=".6"/><rect x="58" y="793" width="2" height="2" fill="#2c3a50"/><rect x="60" y="795" width="1" height="1" fill="#c4d4e8" fill-opacity=".6"/><rect x="61" y="793" width="2" height="2" fill="#2c3a50"/><rect x="63" y="795" width="1" height="1" fill="#c4d4e8" fill-opacity=".6"/><rect x="64" y="793" width="2" height="2" fill="#2c3a50"/><rect x="66" y="795" width="1" height="1" fill="#c4d4e8" fill-opacity=".6"/><path d="M87 794v-23.500l2-2.500h12l2 2h13l2 2v22z" fill="url(#fold)" stroke="#d8b050" stroke-width=".8"/><path d="M87.500 777h30v17h-30z" fill="#fbe7a0"/><rect x="90" y="768.500" width="3" height="2" fill="#28b028"/><rect x="98" y="770.500" width="3" height="2" fill="#d83820"/><rect x="106" y="772.500" width="3" height="2" fill="#2888d8"/><path d="M91.500 770.500h9v2h-9zM99.500 772.500h9v2h-9zM107.500 774.500h8v2h-8z" fill="#fff" fill-opacity=".8"/><path d="M90.500 795v-9.500l2-2.500h19l2 2.500v9.500h-5v-7h-13v7z" fill="#78c4f0" fill-opacity=".9" stroke="#48a0d8" stroke-width=".8"/><rect x="156.500" y="770.500" width="22" height="22" fill="#b4d8f4" stroke="#7cb4e0" stroke-width=".8"/><rect x="153.800" y="769.800" width="22" height="22.500" fill="#a8d0f0" stroke="#6ca8dc" stroke-width=".8"/><circle cx="163.600" cy="780.700" r="8.900" fill="#f0841c" stroke="#d86810" stroke-width=".8"/><path d="M160.500 775.500l8.500 5.200l-8.500 5.200z" fill="#fff"/><circle cx="228.800" cy="779.800" r="14.500" fill="url(#ffo)"/><circle cx="230.500" cy="777" r="10.300" fill="url(#ff)"/><path d="M214.500 777c1-5 3.500-8.500 6-10.500c-.5 2 0 3.500 1.500 4.500c2-1 4.500-.5 6 1c-3 0-4.500 1.500-4.500 3.500c1.500 1 3.500 1.200 5 .8c-1 2.500-3.500 3.500-5 3.500c2 3 7 4 11.500 1.500c-2 5-7 8-12 7.500c-6-.8-9.500-6-8.500-11.800z" fill="#f0701c"/><path d="M275.500 790.500v-20a6 6 0 0 1 6-6h20v26z" fill="#e8f4e4" stroke="#3c9c3c" stroke-width="1.200"/><path d="M279 773l25-1.500l1.500 21l-25 1z" fill="#f4f8f0" stroke="#b8d0b0" stroke-width=".6"/><rect x="296" y="773" width="6.500" height="4.500" fill="#5cae4c"/><rect x="296" y="778.5" width="6.500" height="4.500" fill="#5cae4c"/><rect x="280.5" y="785" width="6.500" height="4.500" fill="#5cae4c"/><rect x="288" y="785.5" width="6.500" height="4.500" fill="#5cae4c"/><rect x="296" y="785.8" width="6.500" height="4.500" fill="#5cae4c"/><path d="M282.500 773l4 .0l2.500 3.300l3-3.500l3.800 0l-5 5l5 5l-4 0l-2.800-3.400l-3 3.400l-3.800 0l5-5z" fill="#1c7424"/><rect x="339.500" y="764.500" width="27" height="26" rx="2" fill="#dcdcdc" stroke="#8c8c8c"/><rect x="341.500" y="767" width="23.500" height="19" fill="#2c2c2c"/><path d="M341.500 771.500h23.500M341.500 776.500h23.500M341.500 781.500h23.500" stroke="#505050" stroke-width=".8"/><path d="M343 777h6l1.500-2l1.500 7l1.500-12l1.500 8l1-1.500h7" fill="none" stroke="#8cd820" stroke-width="1"/><rect x="361.500" y="787.500" width="3" height="1.500" fill="#e02828"/><path d="M349 791h8v2h4v2h-16v-2h4z" fill="#c8c8c8" stroke="#909090" stroke-width=".5"/><path d="M400 784c0-7 6-11 14-11s13 3 13 9c0 8-7 11-12 11c-3 0-3-2-2-4s-1-3-3-3s-10 3-10-2z" fill="#e4f0fa" stroke="#6ca4d8" stroke-width="1"/><circle cx="404.500" cy="781.500" r="2.500" fill="#e03c30"/><circle cx="409.500" cy="776.500" r="2.500" fill="#58b838"/><circle cx="416" cy="774.700" r="2.700" fill="#f0c020"/><circle cx="412.500" cy="783.500" r="2.300" fill="#d8e8f8" stroke="#5890d0" stroke-width=".8"/><path d="M426 770l2.500 1.200l-11.500 23.800l-2.200-1.200z" fill="#e8902c" stroke="#b86818" stroke-width=".5"/><path d="M424.500 770.500l2-6c1.500-.500 3.500 .500 4 2l-3.500 5.500z" fill="#c8a070"/><path d="M462 771v-5h5M487 766h5v5M492 786v5h-5M467 791h-5v-5" fill="none" stroke="#3c88d8" stroke-width="2.500"/><rect x="464.300" y="768.600" width="25.400" height="20" fill="url(#sky)" stroke="#f4f4f4" stroke-width="1"/><path d="M523.500 789.500v-20a5.500 5.500 0 0 1 5.500-5.500h20.500v25.500z" fill="url(#wd)"/><path d="M526 788v-18a4 4 0 0 1 4-4h18" fill="none" stroke="#a8c0e8" stroke-width=".8"/><path d="M531.500 771.500l21.500-1.500l.8 23l-21.500 1z" fill="#f8f8fc" stroke="#c8ccd8" stroke-width=".5"/><path d="M533.500 773l2 0l1.300 5l1.500-5l1.800 0l1.300 5l1.500-5.200l2 0l-2.600 8l-1.900 0l-1.300-4.800l-1.400 4.900l-1.900 0z" fill="#1c3c90"/><path d="M546.500 774h5M546.500 777h5M534 783.500h17.500M534 786.500h17.500M534 789.500h17.500" stroke="#2848a0" stroke-width="1.400"/><path d="M1012.500 800v-29a10 10 0 0 1 10-10h87.500v39z" fill="#6f87a8" fill-opacity=".55" stroke="#a8bcd4" stroke-opacity=".5" stroke-width="1"/><rect x="1110" y="761" width="1" height="39" fill="#5a6e8c"/><path d="M1027 771h42v5h2.500v8.500h-2.500v5h-42z" fill="#d0cece"/><path d="M1040.500 780.500h3.500M1045.500 780.500h3.500M1050.500 780.500h3.500" stroke="#303030" stroke-width="1.200"/><path d="M1082 780.500c0-4 2.500-6 6-6h4.500v3h5v2h-5v2.500h5v2h-5v2.500h-4.500c-3.500 0-6-2-6-6z" fill="#000" stroke="#fff" stroke-width="1.200"/><path d="M1117.500 783.500l4-4.500l4 4.500z" fill="#fff"/><path d="M1139 775.500l6-1v6h-6zM1146 774.300l7-1.100v7.300h-7zM1139 781.500h6v6l-6-1zM1146 781.500h7v7.300l-7-1.100z" fill="#fff"/><path d="M1162.500 778.500h3l4-3.500v13l-4-3.500h-3z" fill="#fff"/><path d="M1171.500 778.500c1.200 1.500 1.200 4.500 0 6M1173.500 776.500c2.200 3 2.200 7 0 10" fill="none" stroke="#fff" stroke-width="1"/><rect x="1266.500" y="761.500" width="14" height="39" fill="url(#sd)" stroke="#4a5668"/><rect x="1267.500" y="762.500" width="12" height="38" fill="none" stroke="#c4d4e8" stroke-opacity=".6"/></svg><span class="t" style="left:1212.00px;top:767.00px;font-size:12px;color:#fff;letter-spacing:-0.706px;">22:34</span><span class="t" style="left:1196.00px;top:783.00px;font-size:12px;color:#fff;letter-spacing:-0.256px;">01/03/2016</span>
</body></html>
